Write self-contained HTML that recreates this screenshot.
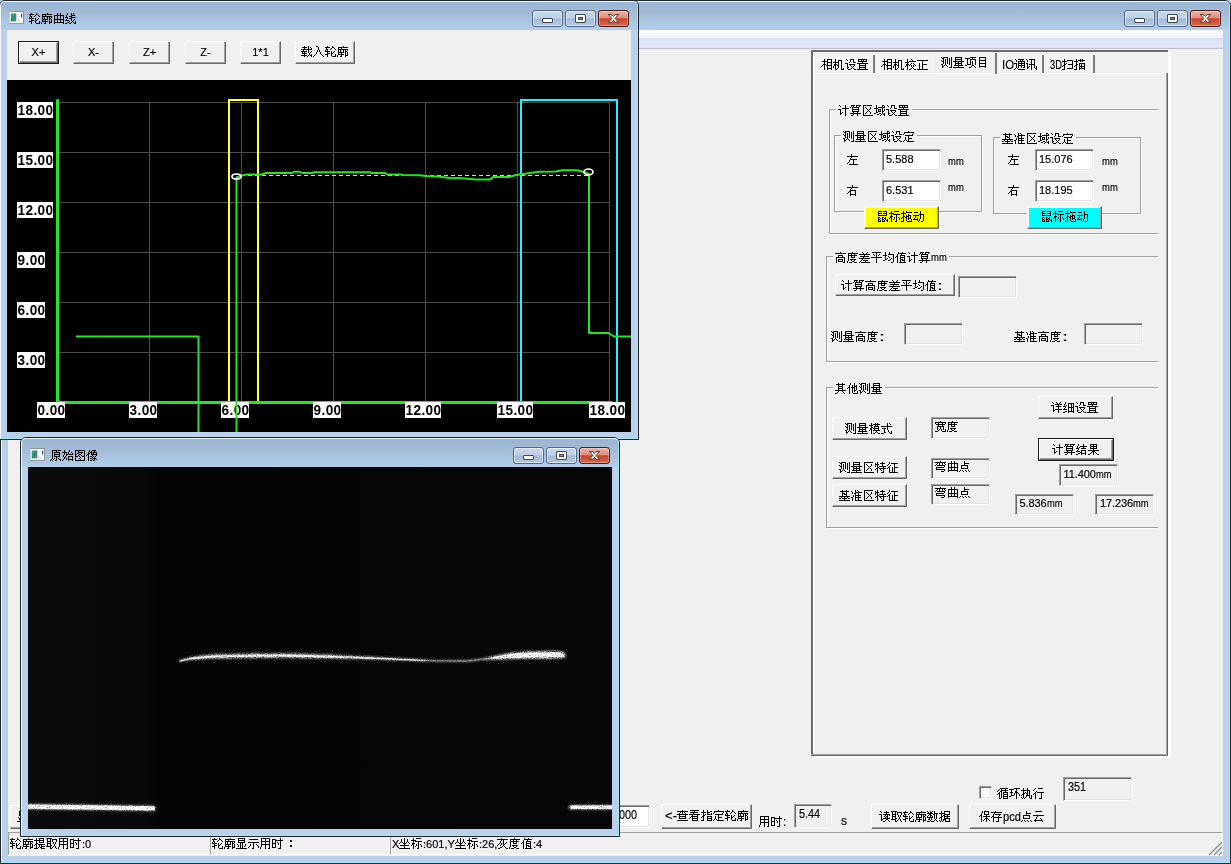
<!DOCTYPE html>
<html lang="zh"><head><meta charset="utf-8"><title>轮廓测量</title>
<style>
*{box-sizing:border-box;margin:0;padding:0}
html,body{width:1231px;height:864px;overflow:hidden;background:#b9d1ea;font-family:"Liberation Sans",sans-serif;}
body{position:relative;opacity:.999}
div,span,svg.bt,svg.abs{position:absolute;display:block}
.t{color:#000;white-space:pre;-webkit-text-stroke:.16px #000;font-family:"Liberation Sans",sans-serif}
.btn{border:1px solid;border-color:#fff #696969 #696969 #fff;box-shadow:inset -1px -1px 0 #a0a0a0, inset 1px 1px 0 #f0f0f0}
.edit{border:1px solid;border-color:#a0a0a0 #fff #fff #a0a0a0;box-shadow:inset 1px 1px 0 #696969, inset -1px -1px 0 #e3e3e3}
.grp{border:1px solid #a0a0a0;box-shadow:1px 1px 0 #fff, inset 1px 1px 0 #fff}
.cap{background:linear-gradient(#97b5d5 0%,#9db8d6 20%,#a4bad5 40%,#abc5e2 70%,#b1ceeb 100%)}
.wb{border:1px solid #566b88;border-radius:3px;background:linear-gradient(#c9d9ec 0%,#bdd0e7 47%,#a4bbd8 53%,#b2c9e4 100%);box-shadow:inset 0 0 0 1px rgba(255,255,255,.5)}
.wc{border:1px solid #47211c;border-radius:3px;background:linear-gradient(#ecb0a2 0%,#df8e7c 45%,#c9432a 52%,#d46a50 100%);box-shadow:inset 0 0 0 1px rgba(255,255,255,.3)}
</style></head><body>

<div style="left:0px;top:0px;width:1231px;height:864px;background:#b9d1ea;border:1px solid #1f252d;border-radius:6px 6px 0 0;overflow:hidden"><div class="cap" style="left:0;top:0;width:1229px;height:29px"></div><div style="left:0;top:0;width:1229px;height:862px;border:1px solid rgba(255,255,255,.9);border-right-color:#a6e3f4;border-bottom-color:#a6e3f4;border-radius:5px 5px 0 0"></div></div>
<div class="wb" style="left:1124.3px;top:10px;width:30.3px;height:16.6px;"></div>
<div style="left:1134.1px;top:18px;width:10.6px;height:4.8px;background:#fff;border:1px solid #3f4854;border-radius:1px"></div>
<div class="wb" style="left:1157.3px;top:10px;width:30.3px;height:16.6px;"></div>
<div style="left:1167.1px;top:14px;width:10.8px;height:8.8px;background:#fff;border:1px solid #3f4854;border-radius:1px"></div>
<div style="left:1169.7px;top:16.8px;width:5.6px;height:3.2px;background:#7d8796;border:1px solid #3f4854"></div>
<div class="wc" style="left:1190.3px;top:10px;width:30.3px;height:16.6px;"></div>
<svg class="abs" style="left:1199.7px;top:14px" width="11" height="9" viewBox="0 0 11 9"><path d="M0.5 0.5h3.2l1.8 2.1 1.8-2.1h3.2l-3.4 3.9 3.4 3.9h-3.2l-1.8-2.1-1.8 2.1h-3.2l3.4-3.9z" fill="#fff" stroke="#4d2620" stroke-width=".9" stroke-linejoin="round"/></svg>
<div style="left:8px;top:30px;width:1215px;height:19px;background:linear-gradient(#fdfdfe 0%,#f1f1f8 40%,#dbe1f1 44%,#e4e6f7 92%,#b9b8c8 93%,#b9b8c8 97%,#f2f1f8 100%)"></div>
<div style="left:8px;top:49px;width:1215px;height:807px;background:#f0f0f0"></div>
<div style="left:811px;top:50px;width:357px;height:706px;border:2px solid #6d6d6d;border-right:none;border-bottom:none"></div>
<div style="left:1168px;top:51px;width:3px;height:707px;background:#fff"></div>
<div style="left:813px;top:756px;width:358px;height:2px;background:#fff"></div>
<div style="left:813px;top:52px;width:2px;height:704px;background:#fff"></div>
<div style="left:811px;top:754px;width:357px;height:2px;background:linear-gradient(#a0a0a0 50%,#696969 50%)"></div>
<div style="left:1166px;top:73px;width:2px;height:683px;background:linear-gradient(90deg,#a0a0a0 50%,#696969 50%)"></div>
<div style="left:815px;top:73px;width:1151px;height:1px;background:#fafafa;width:351px"></div>
<div style="left:816px;top:55px;width:57px;height:18px;background:#f4f4f4"></div>
<svg class="bt" style="left:821px;top:58px" width="50" height="14" viewBox="0 -1 50 14" shape-rendering="crispEdges" role="img" aria-label="相机设置"><title>相机设置</title><path fill="#000" d="M3 0h1v1h-1zM6 0h5v1h-5zM3 1h1v1h-1zM6 1h1v1h-1zM10 1h1v1h-1zM1 2h6v1h-6zM10 2h1v1h-1zM3 3h1v1h-1zM6 3h5v1h-5zM3 4h1v1h-1zM6 4h1v1h-1zM10 4h1v1h-1zM2 5h3v1h-3zM6 5h1v1h-1zM10 5h1v1h-1zM1 6h1v1h-1zM3 6h1v1h-1zM5 6h6v1h-6zM0 7h1v1h-1zM3 7h1v1h-1zM6 7h1v1h-1zM10 7h1v1h-1zM3 8h1v1h-1zM6 8h1v1h-1zM10 8h1v1h-1zM3 9h1v1h-1zM6 9h5v1h-5zM3 10h1v1h-1zM6 10h1v1h-1zM10 10h1v1h-1zM14 0h1v1h-1zM14 1h1v1h-1zM17 1h4v1h-4zM14 2h1v1h-1zM17 2h1v1h-1zM20 2h1v1h-1zM12 3h6v1h-6zM20 3h1v1h-1zM14 4h1v1h-1zM17 4h1v1h-1zM20 4h1v1h-1zM13 5h3v1h-3zM17 5h1v1h-1zM20 5h1v1h-1zM13 6h2v1h-2zM16 6h2v1h-2zM20 6h1v1h-1zM12 7h1v1h-1zM14 7h1v1h-1zM17 7h1v1h-1zM20 7h1v1h-1zM12 8h1v1h-1zM14 8h1v1h-1zM17 8h1v1h-1zM20 8h1v1h-1zM14 9h1v1h-1zM16 9h1v1h-1zM20 9h1v1h-1zM22 9h1v1h-1zM14 10h2v1h-2zM20 10h3v1h-3zM25 0h1v1h-1zM29 0h4v1h-4zM26 1h1v1h-1zM29 1h1v1h-1zM32 1h1v1h-1zM29 2h1v1h-1zM32 2h1v1h-1zM28 3h1v1h-1zM32 3h3v1h-3zM24 4h3v1h-3zM26 5h1v1h-1zM28 5h6v1h-6zM26 6h1v1h-1zM29 6h1v1h-1zM33 6h1v1h-1zM26 7h1v1h-1zM30 7h1v1h-1zM32 7h1v1h-1zM26 8h2v1h-2zM31 8h1v1h-1zM26 9h1v1h-1zM30 9h1v1h-1zM32 9h1v1h-1zM27 10h3v1h-3zM33 10h2v1h-2zM37 0h9v1h-9zM37 1h1v1h-1zM40 1h1v1h-1zM42 1h1v1h-1zM45 1h1v1h-1zM37 2h9v1h-9zM41 3h1v1h-1zM36 4h11v1h-11zM38 5h1v1h-1zM44 5h1v1h-1zM38 6h7v1h-7zM38 7h1v1h-1zM44 7h1v1h-1zM38 8h7v1h-7zM38 9h1v1h-1zM44 9h1v1h-1zM36 10h11v1h-11z"/></svg>
<div style="left:873px;top:55px;width:2px;height:18px;background:#7a7a7a"></div>
<div style="left:877px;top:55px;width:57px;height:18px;background:#f4f4f4"></div>
<svg class="bt" style="left:881px;top:58px" width="50" height="14" viewBox="0 -1 50 14" shape-rendering="crispEdges" role="img" aria-label="相机校正"><title>相机校正</title><path fill="#000" d="M3 0h1v1h-1zM6 0h5v1h-5zM3 1h1v1h-1zM6 1h1v1h-1zM10 1h1v1h-1zM1 2h6v1h-6zM10 2h1v1h-1zM3 3h1v1h-1zM6 3h5v1h-5zM3 4h1v1h-1zM6 4h1v1h-1zM10 4h1v1h-1zM2 5h3v1h-3zM6 5h1v1h-1zM10 5h1v1h-1zM1 6h1v1h-1zM3 6h1v1h-1zM5 6h6v1h-6zM0 7h1v1h-1zM3 7h1v1h-1zM6 7h1v1h-1zM10 7h1v1h-1zM3 8h1v1h-1zM6 8h1v1h-1zM10 8h1v1h-1zM3 9h1v1h-1zM6 9h5v1h-5zM3 10h1v1h-1zM6 10h1v1h-1zM10 10h1v1h-1zM14 0h1v1h-1zM14 1h1v1h-1zM17 1h4v1h-4zM14 2h1v1h-1zM17 2h1v1h-1zM20 2h1v1h-1zM12 3h6v1h-6zM20 3h1v1h-1zM14 4h1v1h-1zM17 4h1v1h-1zM20 4h1v1h-1zM13 5h3v1h-3zM17 5h1v1h-1zM20 5h1v1h-1zM13 6h2v1h-2zM16 6h2v1h-2zM20 6h1v1h-1zM12 7h1v1h-1zM14 7h1v1h-1zM17 7h1v1h-1zM20 7h1v1h-1zM12 8h1v1h-1zM14 8h1v1h-1zM17 8h1v1h-1zM20 8h1v1h-1zM14 9h1v1h-1zM16 9h1v1h-1zM20 9h1v1h-1zM22 9h1v1h-1zM14 10h2v1h-2zM20 10h3v1h-3zM26 0h1v1h-1zM30 0h1v1h-1zM26 1h1v1h-1zM31 1h1v1h-1zM26 2h1v1h-1zM28 2h7v1h-7zM24 3h4v1h-4zM26 4h1v1h-1zM30 4h1v1h-1zM32 4h1v1h-1zM25 5h3v1h-3zM29 5h1v1h-1zM33 5h1v1h-1zM25 6h2v1h-2zM28 6h1v1h-1zM30 6h1v1h-1zM32 6h1v1h-1zM34 6h1v1h-1zM24 7h1v1h-1zM26 7h1v1h-1zM30 7h1v1h-1zM32 7h1v1h-1zM26 8h1v1h-1zM31 8h1v1h-1zM26 9h1v1h-1zM30 9h1v1h-1zM32 9h1v1h-1zM26 10h1v1h-1zM28 10h2v1h-2zM33 10h2v1h-2zM36 1h11v1h-11zM41 2h1v1h-1zM41 3h1v1h-1zM38 4h1v1h-1zM41 4h1v1h-1zM38 5h1v1h-1zM41 5h5v1h-5zM38 6h1v1h-1zM41 6h1v1h-1zM38 7h1v1h-1zM41 7h1v1h-1zM38 8h1v1h-1zM41 8h1v1h-1zM38 9h1v1h-1zM41 9h1v1h-1zM36 10h11v1h-11z"/></svg>
<svg class="bt" style="left:941px;top:56px" width="50" height="14" viewBox="0 -1 50 14" shape-rendering="crispEdges" role="img" aria-label="测量项目"><title>测量项目</title><path fill="#000" d="M0 0h1v1h-1zM2 0h5v1h-5zM10 0h1v1h-1zM1 1h2v1h-2zM6 1h1v1h-1zM8 1h1v1h-1zM10 1h1v1h-1zM2 2h1v1h-1zM4 2h1v1h-1zM6 2h1v1h-1zM8 2h1v1h-1zM10 2h1v1h-1zM0 3h1v1h-1zM2 3h1v1h-1zM4 3h1v1h-1zM6 3h1v1h-1zM8 3h1v1h-1zM10 3h1v1h-1zM1 4h2v1h-2zM4 4h1v1h-1zM6 4h1v1h-1zM8 4h1v1h-1zM10 4h1v1h-1zM2 5h1v1h-1zM4 5h1v1h-1zM6 5h1v1h-1zM8 5h1v1h-1zM10 5h1v1h-1zM2 6h1v1h-1zM4 6h1v1h-1zM6 6h1v1h-1zM8 6h1v1h-1zM10 6h1v1h-1zM0 7h2v1h-2zM4 7h1v1h-1zM8 7h1v1h-1zM10 7h1v1h-1zM1 8h1v1h-1zM3 8h1v1h-1zM5 8h1v1h-1zM10 8h1v1h-1zM1 9h2v1h-2zM6 9h1v1h-1zM10 9h1v1h-1zM1 10h1v1h-1zM8 10h3v1h-3zM14 0h7v1h-7zM14 1h1v1h-1zM20 1h1v1h-1zM14 2h7v1h-7zM14 3h1v1h-1zM20 3h1v1h-1zM12 4h11v1h-11zM14 5h1v1h-1zM17 5h1v1h-1zM20 5h1v1h-1zM14 6h7v1h-7zM14 7h1v1h-1zM17 7h1v1h-1zM20 7h1v1h-1zM13 8h9v1h-9zM17 9h1v1h-1zM12 10h11v1h-11zM29 0h6v1h-6zM24 1h5v1h-5zM31 1h1v1h-1zM26 2h1v1h-1zM29 2h6v1h-6zM26 3h1v1h-1zM29 3h1v1h-1zM34 3h1v1h-1zM26 4h1v1h-1zM29 4h1v1h-1zM31 4h1v1h-1zM34 4h1v1h-1zM26 5h1v1h-1zM29 5h1v1h-1zM31 5h1v1h-1zM34 5h1v1h-1zM26 6h1v1h-1zM29 6h1v1h-1zM31 6h1v1h-1zM34 6h1v1h-1zM26 7h4v1h-4zM31 7h1v1h-1zM34 7h1v1h-1zM24 8h2v1h-2zM31 8h2v1h-2zM30 9h1v1h-1zM33 9h1v1h-1zM28 10h2v1h-2zM34 10h1v1h-1zM38 0h7v1h-7zM38 1h1v1h-1zM44 1h1v1h-1zM38 2h1v1h-1zM44 2h1v1h-1zM38 3h7v1h-7zM38 4h1v1h-1zM44 4h1v1h-1zM38 5h1v1h-1zM44 5h1v1h-1zM38 6h7v1h-7zM38 7h1v1h-1zM44 7h1v1h-1zM38 8h1v1h-1zM44 8h1v1h-1zM38 9h7v1h-7zM38 10h1v1h-1zM44 10h1v1h-1z"/></svg>
<div style="left:995px;top:53px;width:2px;height:21px;background:#7a7a7a"></div>
<div style="left:998px;top:55px;width:44px;height:18px;background:#f4f4f4"></div>
<span class="t" style="left:1002.0px;top:58px;font-size:12px;line-height:14px;color:#000;transform:scaleX(0.947);transform-origin:0 0;">IO</span>
<svg class="bt" style="left:1014px;top:58px" width="26" height="14" viewBox="0 -1 26 14" shape-rendering="crispEdges" role="img" aria-label="通讯"><title>通讯</title><path fill="#000" d="M1 0h1v1h-1zM4 0h6v1h-6zM2 1h1v1h-1zM6 1h1v1h-1zM8 1h1v1h-1zM2 2h1v1h-1zM4 2h7v1h-7zM4 3h1v1h-1zM7 3h1v1h-1zM10 3h1v1h-1zM0 4h3v1h-3zM4 4h7v1h-7zM2 5h1v1h-1zM4 5h1v1h-1zM7 5h1v1h-1zM10 5h1v1h-1zM2 6h1v1h-1zM4 6h7v1h-7zM2 7h1v1h-1zM4 7h1v1h-1zM7 7h1v1h-1zM10 7h1v1h-1zM2 8h1v1h-1zM4 8h1v1h-1zM7 8h1v1h-1zM9 8h2v1h-2zM1 9h1v1h-1zM3 9h1v1h-1zM0 10h1v1h-1zM4 10h7v1h-7zM12 0h1v1h-1zM15 0h6v1h-6zM13 1h1v1h-1zM17 1h1v1h-1zM20 1h1v1h-1zM13 2h1v1h-1zM17 2h1v1h-1zM20 2h1v1h-1zM17 3h1v1h-1zM20 3h1v1h-1zM12 4h2v1h-2zM17 4h1v1h-1zM20 4h1v1h-1zM13 5h1v1h-1zM15 5h6v1h-6zM13 6h1v1h-1zM17 6h1v1h-1zM20 6h1v1h-1zM13 7h1v1h-1zM15 7h1v1h-1zM17 7h1v1h-1zM20 7h1v1h-1zM22 7h1v1h-1zM13 8h2v1h-2zM17 8h1v1h-1zM20 8h1v1h-1zM22 8h1v1h-1zM13 9h1v1h-1zM17 9h1v1h-1zM21 9h2v1h-2zM17 10h1v1h-1zM22 10h1v1h-1z"/></svg>
<div style="left:1042px;top:55px;width:2px;height:18px;background:#7a7a7a"></div>
<div style="left:1046px;top:55px;width:47px;height:18px;background:#f4f4f4"></div>
<span class="t" style="left:1050.0px;top:58px;font-size:12px;line-height:14px;color:#000;transform:scaleX(0.782);transform-origin:0 0;">3D</span>
<svg class="bt" style="left:1062px;top:58px" width="26" height="14" viewBox="0 -1 26 14" shape-rendering="crispEdges" role="img" aria-label="扫描"><title>扫描</title><path fill="#000" d="M2 0h1v1h-1zM2 1h1v1h-1zM5 1h6v1h-6zM0 2h5v1h-5zM10 2h1v1h-1zM2 3h1v1h-1zM10 3h1v1h-1zM2 4h1v1h-1zM4 4h1v1h-1zM10 4h1v1h-1zM2 5h2v1h-2zM6 5h5v1h-5zM1 6h2v1h-2zM10 6h1v1h-1zM0 7h1v1h-1zM2 7h1v1h-1zM10 7h1v1h-1zM2 8h1v1h-1zM10 8h1v1h-1zM2 9h1v1h-1zM5 9h6v1h-6zM0 10h3v1h-3zM14 0h1v1h-1zM18 0h1v1h-1zM20 0h1v1h-1zM14 1h1v1h-1zM16 1h7v1h-7zM12 2h4v1h-4zM18 2h1v1h-1zM20 2h1v1h-1zM14 3h1v1h-1zM14 4h1v1h-1zM17 4h6v1h-6zM14 5h2v1h-2zM17 5h1v1h-1zM19 5h1v1h-1zM22 5h1v1h-1zM13 6h2v1h-2zM17 6h1v1h-1zM19 6h1v1h-1zM22 6h1v1h-1zM12 7h1v1h-1zM14 7h1v1h-1zM17 7h6v1h-6zM14 8h1v1h-1zM17 8h1v1h-1zM19 8h1v1h-1zM22 8h1v1h-1zM14 9h1v1h-1zM17 9h6v1h-6zM12 10h3v1h-3zM17 10h1v1h-1zM22 10h1v1h-1z"/></svg>
<div style="left:1093px;top:55px;width:2px;height:18px;background:#7a7a7a"></div>
<div style="left:829px;top:109px;width:329px;height:126px;border:1px solid #a0a0a0;border-right:none;border-bottom:none;box-shadow:inset 1px 1px 0 #fff"></div>
<div style="left:829px;top:233px;width:329px;height:2px;background:linear-gradient(#a0a0a0 50%,#fff 50%)"></div>
<div style="left:836px;top:104px;width:76px;height:13px;background:#f0f0f0"></div>
<svg class="bt" style="left:838px;top:104px" width="74" height="14" viewBox="0 -1 74 14" shape-rendering="crispEdges" role="img" aria-label="计算区域设置"><title>计算区域设置</title><path fill="#000" d="M1 0h1v1h-1zM7 0h1v1h-1zM2 1h1v1h-1zM7 1h1v1h-1zM7 2h1v1h-1zM4 3h7v1h-7zM0 4h3v1h-3zM7 4h1v1h-1zM2 5h1v1h-1zM7 5h1v1h-1zM2 6h1v1h-1zM7 6h1v1h-1zM2 7h1v1h-1zM4 7h1v1h-1zM7 7h1v1h-1zM2 8h2v1h-2zM7 8h1v1h-1zM2 9h1v1h-1zM7 9h1v1h-1zM7 10h1v1h-1zM13 0h4v1h-4zM18 0h5v1h-5zM13 1h1v1h-1zM15 1h1v1h-1zM18 1h1v1h-1zM21 1h1v1h-1zM12 2h1v1h-1zM14 2h7v1h-7zM14 3h1v1h-1zM20 3h1v1h-1zM14 4h7v1h-7zM14 5h1v1h-1zM20 5h1v1h-1zM14 6h7v1h-7zM15 7h1v1h-1zM19 7h1v1h-1zM12 8h11v1h-11zM15 9h1v1h-1zM19 9h1v1h-1zM13 10h2v1h-2zM19 10h1v1h-1zM25 0h9v1h-9zM25 1h1v1h-1zM25 2h1v1h-1zM27 2h1v1h-1zM32 2h1v1h-1zM25 3h1v1h-1zM28 3h1v1h-1zM32 3h1v1h-1zM25 4h1v1h-1zM29 4h1v1h-1zM31 4h1v1h-1zM25 5h1v1h-1zM30 5h1v1h-1zM25 6h1v1h-1zM29 6h1v1h-1zM31 6h1v1h-1zM25 7h1v1h-1zM28 7h1v1h-1zM32 7h1v1h-1zM25 8h1v1h-1zM27 8h1v1h-1zM32 8h1v1h-1zM25 9h1v1h-1zM25 10h10v1h-10zM38 0h1v1h-1zM44 0h2v1h-2zM38 1h1v1h-1zM44 1h1v1h-1zM46 1h1v1h-1zM38 2h1v1h-1zM40 2h7v1h-7zM36 3h4v1h-4zM44 3h1v1h-1zM38 4h1v1h-1zM40 4h3v1h-3zM44 4h1v1h-1zM46 4h1v1h-1zM38 5h1v1h-1zM40 5h1v1h-1zM42 5h1v1h-1zM44 5h1v1h-1zM46 5h1v1h-1zM38 6h1v1h-1zM40 6h3v1h-3zM44 6h2v1h-2zM38 7h2v1h-2zM44 7h1v1h-1zM36 8h2v1h-2zM41 8h2v1h-2zM44 8h1v1h-1zM46 8h1v1h-1zM39 9h2v1h-2zM43 9h1v1h-1zM45 9h2v1h-2zM42 10h1v1h-1zM46 10h1v1h-1zM49 0h1v1h-1zM53 0h4v1h-4zM50 1h1v1h-1zM53 1h1v1h-1zM56 1h1v1h-1zM53 2h1v1h-1zM56 2h1v1h-1zM52 3h1v1h-1zM56 3h3v1h-3zM48 4h3v1h-3zM50 5h1v1h-1zM52 5h6v1h-6zM50 6h1v1h-1zM53 6h1v1h-1zM57 6h1v1h-1zM50 7h1v1h-1zM54 7h1v1h-1zM56 7h1v1h-1zM50 8h2v1h-2zM55 8h1v1h-1zM50 9h1v1h-1zM54 9h1v1h-1zM56 9h1v1h-1zM51 10h3v1h-3zM57 10h2v1h-2zM61 0h9v1h-9zM61 1h1v1h-1zM64 1h1v1h-1zM66 1h1v1h-1zM69 1h1v1h-1zM61 2h9v1h-9zM65 3h1v1h-1zM60 4h11v1h-11zM62 5h1v1h-1zM68 5h1v1h-1zM62 6h7v1h-7zM62 7h1v1h-1zM68 7h1v1h-1zM62 8h7v1h-7zM62 9h1v1h-1zM68 9h1v1h-1zM60 10h11v1h-11z"/></svg>
<div class="grp" style="left:834px;top:135px;width:148px;height:77px;"></div>
<div style="left:841px;top:130px;width:76px;height:13px;background:#f0f0f0"></div>
<svg class="bt" style="left:843px;top:130px" width="74" height="14" viewBox="0 -1 74 14" shape-rendering="crispEdges" role="img" aria-label="测量区域设定"><title>测量区域设定</title><path fill="#000" d="M0 0h1v1h-1zM2 0h5v1h-5zM10 0h1v1h-1zM1 1h2v1h-2zM6 1h1v1h-1zM8 1h1v1h-1zM10 1h1v1h-1zM2 2h1v1h-1zM4 2h1v1h-1zM6 2h1v1h-1zM8 2h1v1h-1zM10 2h1v1h-1zM0 3h1v1h-1zM2 3h1v1h-1zM4 3h1v1h-1zM6 3h1v1h-1zM8 3h1v1h-1zM10 3h1v1h-1zM1 4h2v1h-2zM4 4h1v1h-1zM6 4h1v1h-1zM8 4h1v1h-1zM10 4h1v1h-1zM2 5h1v1h-1zM4 5h1v1h-1zM6 5h1v1h-1zM8 5h1v1h-1zM10 5h1v1h-1zM2 6h1v1h-1zM4 6h1v1h-1zM6 6h1v1h-1zM8 6h1v1h-1zM10 6h1v1h-1zM0 7h2v1h-2zM4 7h1v1h-1zM8 7h1v1h-1zM10 7h1v1h-1zM1 8h1v1h-1zM3 8h1v1h-1zM5 8h1v1h-1zM10 8h1v1h-1zM1 9h2v1h-2zM6 9h1v1h-1zM10 9h1v1h-1zM1 10h1v1h-1zM8 10h3v1h-3zM14 0h7v1h-7zM14 1h1v1h-1zM20 1h1v1h-1zM14 2h7v1h-7zM14 3h1v1h-1zM20 3h1v1h-1zM12 4h11v1h-11zM14 5h1v1h-1zM17 5h1v1h-1zM20 5h1v1h-1zM14 6h7v1h-7zM14 7h1v1h-1zM17 7h1v1h-1zM20 7h1v1h-1zM13 8h9v1h-9zM17 9h1v1h-1zM12 10h11v1h-11zM25 0h9v1h-9zM25 1h1v1h-1zM25 2h1v1h-1zM27 2h1v1h-1zM32 2h1v1h-1zM25 3h1v1h-1zM28 3h1v1h-1zM32 3h1v1h-1zM25 4h1v1h-1zM29 4h1v1h-1zM31 4h1v1h-1zM25 5h1v1h-1zM30 5h1v1h-1zM25 6h1v1h-1zM29 6h1v1h-1zM31 6h1v1h-1zM25 7h1v1h-1zM28 7h1v1h-1zM32 7h1v1h-1zM25 8h1v1h-1zM27 8h1v1h-1zM32 8h1v1h-1zM25 9h1v1h-1zM25 10h10v1h-10zM38 0h1v1h-1zM44 0h2v1h-2zM38 1h1v1h-1zM44 1h1v1h-1zM46 1h1v1h-1zM38 2h1v1h-1zM40 2h7v1h-7zM36 3h4v1h-4zM44 3h1v1h-1zM38 4h1v1h-1zM40 4h3v1h-3zM44 4h1v1h-1zM46 4h1v1h-1zM38 5h1v1h-1zM40 5h1v1h-1zM42 5h1v1h-1zM44 5h1v1h-1zM46 5h1v1h-1zM38 6h1v1h-1zM40 6h3v1h-3zM44 6h2v1h-2zM38 7h2v1h-2zM44 7h1v1h-1zM36 8h2v1h-2zM41 8h2v1h-2zM44 8h1v1h-1zM46 8h1v1h-1zM39 9h2v1h-2zM43 9h1v1h-1zM45 9h2v1h-2zM42 10h1v1h-1zM46 10h1v1h-1zM49 0h1v1h-1zM53 0h4v1h-4zM50 1h1v1h-1zM53 1h1v1h-1zM56 1h1v1h-1zM53 2h1v1h-1zM56 2h1v1h-1zM52 3h1v1h-1zM56 3h3v1h-3zM48 4h3v1h-3zM50 5h1v1h-1zM52 5h6v1h-6zM50 6h1v1h-1zM53 6h1v1h-1zM57 6h1v1h-1zM50 7h1v1h-1zM54 7h1v1h-1zM56 7h1v1h-1zM50 8h2v1h-2zM55 8h1v1h-1zM50 9h1v1h-1zM54 9h1v1h-1zM56 9h1v1h-1zM51 10h3v1h-3zM57 10h2v1h-2zM65 0h1v1h-1zM61 1h10v1h-10zM61 2h1v1h-1zM70 2h1v1h-1zM60 3h1v1h-1zM69 3h1v1h-1zM62 4h8v1h-8zM65 5h1v1h-1zM62 6h1v1h-1zM65 6h1v1h-1zM62 7h1v1h-1zM65 7h4v1h-4zM62 8h1v1h-1zM65 8h1v1h-1zM61 9h1v1h-1zM63 9h1v1h-1zM65 9h1v1h-1zM60 10h1v1h-1zM64 10h7v1h-7z"/></svg>
<div class="grp" style="left:993px;top:137px;width:148px;height:77px;"></div>
<div style="left:1000px;top:132px;width:76px;height:13px;background:#f0f0f0"></div>
<svg class="bt" style="left:1002px;top:132px" width="74" height="14" viewBox="0 -1 74 14" shape-rendering="crispEdges" role="img" aria-label="基准区域设定"><title>基准区域设定</title><path fill="#000" d="M3 0h1v1h-1zM7 0h1v1h-1zM1 1h9v1h-9zM3 2h1v1h-1zM7 2h1v1h-1zM3 3h3v1h-3zM7 3h1v1h-1zM3 4h1v1h-1zM5 4h3v1h-3zM3 5h1v1h-1zM7 5h1v1h-1zM0 6h11v1h-11zM2 7h1v1h-1zM5 7h1v1h-1zM8 7h1v1h-1zM0 8h2v1h-2zM3 8h5v1h-5zM9 8h2v1h-2zM5 9h1v1h-1zM0 10h11v1h-11zM16 0h1v1h-1zM18 0h1v1h-1zM12 1h1v1h-1zM16 1h1v1h-1zM19 1h1v1h-1zM13 2h1v1h-1zM16 2h7v1h-7zM13 3h1v1h-1zM15 3h2v1h-2zM19 3h1v1h-1zM16 4h1v1h-1zM19 4h1v1h-1zM14 5h1v1h-1zM16 5h6v1h-6zM14 6h1v1h-1zM16 6h1v1h-1zM19 6h1v1h-1zM12 7h2v1h-2zM16 7h6v1h-6zM13 8h1v1h-1zM16 8h1v1h-1zM19 8h1v1h-1zM13 9h1v1h-1zM16 9h1v1h-1zM19 9h1v1h-1zM13 10h1v1h-1zM16 10h7v1h-7zM25 0h9v1h-9zM25 1h1v1h-1zM25 2h1v1h-1zM27 2h1v1h-1zM32 2h1v1h-1zM25 3h1v1h-1zM28 3h1v1h-1zM32 3h1v1h-1zM25 4h1v1h-1zM29 4h1v1h-1zM31 4h1v1h-1zM25 5h1v1h-1zM30 5h1v1h-1zM25 6h1v1h-1zM29 6h1v1h-1zM31 6h1v1h-1zM25 7h1v1h-1zM28 7h1v1h-1zM32 7h1v1h-1zM25 8h1v1h-1zM27 8h1v1h-1zM32 8h1v1h-1zM25 9h1v1h-1zM25 10h10v1h-10zM38 0h1v1h-1zM44 0h2v1h-2zM38 1h1v1h-1zM44 1h1v1h-1zM46 1h1v1h-1zM38 2h1v1h-1zM40 2h7v1h-7zM36 3h4v1h-4zM44 3h1v1h-1zM38 4h1v1h-1zM40 4h3v1h-3zM44 4h1v1h-1zM46 4h1v1h-1zM38 5h1v1h-1zM40 5h1v1h-1zM42 5h1v1h-1zM44 5h1v1h-1zM46 5h1v1h-1zM38 6h1v1h-1zM40 6h3v1h-3zM44 6h2v1h-2zM38 7h2v1h-2zM44 7h1v1h-1zM36 8h2v1h-2zM41 8h2v1h-2zM44 8h1v1h-1zM46 8h1v1h-1zM39 9h2v1h-2zM43 9h1v1h-1zM45 9h2v1h-2zM42 10h1v1h-1zM46 10h1v1h-1zM49 0h1v1h-1zM53 0h4v1h-4zM50 1h1v1h-1zM53 1h1v1h-1zM56 1h1v1h-1zM53 2h1v1h-1zM56 2h1v1h-1zM52 3h1v1h-1zM56 3h3v1h-3zM48 4h3v1h-3zM50 5h1v1h-1zM52 5h6v1h-6zM50 6h1v1h-1zM53 6h1v1h-1zM57 6h1v1h-1zM50 7h1v1h-1zM54 7h1v1h-1zM56 7h1v1h-1zM50 8h2v1h-2zM55 8h1v1h-1zM50 9h1v1h-1zM54 9h1v1h-1zM56 9h1v1h-1zM51 10h3v1h-3zM57 10h2v1h-2zM65 0h1v1h-1zM61 1h10v1h-10zM61 2h1v1h-1zM70 2h1v1h-1zM60 3h1v1h-1zM69 3h1v1h-1zM62 4h8v1h-8zM65 5h1v1h-1zM62 6h1v1h-1zM65 6h1v1h-1zM62 7h1v1h-1zM65 7h4v1h-4zM62 8h1v1h-1zM65 8h1v1h-1zM61 9h1v1h-1zM63 9h1v1h-1zM65 9h1v1h-1zM60 10h1v1h-1zM64 10h7v1h-7z"/></svg>
<svg class="bt" style="left:847px;top:153px" width="14" height="14" viewBox="0 -1 14 14" shape-rendering="crispEdges" role="img" aria-label="左"><title>左</title><path fill="#000" d="M4 0h1v1h-1zM4 1h1v1h-1zM0 2h11v1h-11zM4 3h1v1h-1zM3 4h1v1h-1zM3 5h7v1h-7zM2 6h1v1h-1zM6 6h1v1h-1zM2 7h1v1h-1zM6 7h1v1h-1zM1 8h1v1h-1zM6 8h1v1h-1zM0 9h1v1h-1zM6 9h1v1h-1zM2 10h9v1h-9z"/></svg>
<div class="edit" style="left:882px;top:149px;width:59px;height:22px;background:#fff"></div>
<span class="t" style="left:886px;top:153px;font-size:11px;line-height:13px;">5.588</span>
<span class="t" style="left:947.5px;top:155px;font-size:11px;line-height:13px;transform:scaleX(.86);transform-origin:0 0">mm</span>
<svg class="bt" style="left:847px;top:184px" width="14" height="14" viewBox="0 -1 14 14" shape-rendering="crispEdges" role="img" aria-label="右"><title>右</title><path fill="#000" d="M5 0h1v1h-1zM5 1h1v1h-1zM0 2h11v1h-11zM4 3h1v1h-1zM3 4h1v1h-1zM3 5h6v1h-6zM2 6h2v1h-2zM8 6h1v1h-1zM1 7h1v1h-1zM3 7h1v1h-1zM8 7h1v1h-1zM0 8h1v1h-1zM3 8h1v1h-1zM8 8h1v1h-1zM3 9h6v1h-6zM3 10h1v1h-1zM8 10h1v1h-1z"/></svg>
<div class="edit" style="left:882px;top:180px;width:59px;height:22px;background:#fff"></div>
<span class="t" style="left:886px;top:184px;font-size:11px;line-height:13px;">6.531</span>
<span class="t" style="left:947.5px;top:181px;font-size:11px;line-height:13px;transform:scaleX(.86);transform-origin:0 0">mm</span>
<div class="btn" style="left:864px;top:206px;width:75px;height:23px;background:#ffff00"></div>
<svg class="bt" style="left:877px;top:210px" width="50" height="14" viewBox="0 -1 50 14" shape-rendering="crispEdges" role="img" aria-label="鼠标拖动"><title>鼠标拖动</title><path fill="#000" d="M1 0h4v1h-4zM6 0h4v1h-4zM1 1h1v1h-1zM9 1h1v1h-1zM1 2h4v1h-4zM6 2h4v1h-4zM1 3h1v1h-1zM9 3h1v1h-1zM1 4h9v1h-9zM1 6h2v1h-2zM5 6h2v1h-2zM8 6h1v1h-1zM1 7h1v1h-1zM3 7h1v1h-1zM5 7h1v1h-1zM7 7h2v1h-2zM1 8h2v1h-2zM5 8h2v1h-2zM8 8h1v1h-1zM10 8h1v1h-1zM1 9h1v1h-1zM3 9h1v1h-1zM5 9h1v1h-1zM7 9h1v1h-1zM9 9h2v1h-2zM1 10h3v1h-3zM5 10h3v1h-3zM10 10h1v1h-1zM14 0h1v1h-1zM17 0h5v1h-5zM14 1h1v1h-1zM12 2h5v1h-5zM14 3h1v1h-1zM16 3h7v1h-7zM14 4h1v1h-1zM19 4h1v1h-1zM13 5h3v1h-3zM19 5h1v1h-1zM13 6h2v1h-2zM17 6h1v1h-1zM19 6h1v1h-1zM21 6h1v1h-1zM12 7h1v1h-1zM14 7h1v1h-1zM17 7h1v1h-1zM19 7h1v1h-1zM22 7h1v1h-1zM14 8h1v1h-1zM16 8h1v1h-1zM19 8h1v1h-1zM22 8h1v1h-1zM14 9h1v1h-1zM19 9h1v1h-1zM14 10h1v1h-1zM18 10h2v1h-2zM26 0h1v1h-1zM29 0h1v1h-1zM26 1h1v1h-1zM29 1h6v1h-6zM24 2h5v1h-5zM26 3h1v1h-1zM31 3h1v1h-1zM26 4h1v1h-1zM29 4h1v1h-1zM31 4h3v1h-3zM26 5h2v1h-2zM29 5h3v1h-3zM33 5h1v1h-1zM25 6h2v1h-2zM28 6h2v1h-2zM31 6h1v1h-1zM33 6h1v1h-1zM24 7h1v1h-1zM26 7h1v1h-1zM29 7h1v1h-1zM31 7h3v1h-3zM26 8h1v1h-1zM29 8h1v1h-1zM31 8h1v1h-1zM34 8h1v1h-1zM26 9h1v1h-1zM29 9h1v1h-1zM34 9h1v1h-1zM24 10h3v1h-3zM30 10h5v1h-5zM43 0h1v1h-1zM37 1h4v1h-4zM43 1h1v1h-1zM43 2h1v1h-1zM42 3h5v1h-5zM36 4h6v1h-6zM43 4h1v1h-1zM46 4h1v1h-1zM38 5h1v1h-1zM43 5h1v1h-1zM46 5h1v1h-1zM38 6h1v1h-1zM43 6h1v1h-1zM46 6h1v1h-1zM37 7h1v1h-1zM40 7h1v1h-1zM43 7h1v1h-1zM46 7h1v1h-1zM36 8h5v1h-5zM42 8h1v1h-1zM46 8h1v1h-1zM40 9h1v1h-1zM42 9h1v1h-1zM46 9h1v1h-1zM41 10h1v1h-1zM44 10h2v1h-2z"/></svg>
<svg class="bt" style="left:1008px;top:153px" width="14" height="14" viewBox="0 -1 14 14" shape-rendering="crispEdges" role="img" aria-label="左"><title>左</title><path fill="#000" d="M4 0h1v1h-1zM4 1h1v1h-1zM0 2h11v1h-11zM4 3h1v1h-1zM3 4h1v1h-1zM3 5h7v1h-7zM2 6h1v1h-1zM6 6h1v1h-1zM2 7h1v1h-1zM6 7h1v1h-1zM1 8h1v1h-1zM6 8h1v1h-1zM0 9h1v1h-1zM6 9h1v1h-1zM2 10h9v1h-9z"/></svg>
<div class="edit" style="left:1035px;top:149px;width:59px;height:22px;background:#fff"></div>
<span class="t" style="left:1039px;top:153px;font-size:11px;line-height:13px;">15.076</span>
<span class="t" style="left:1101.5px;top:155px;font-size:11px;line-height:13px;transform:scaleX(.86);transform-origin:0 0">mm</span>
<svg class="bt" style="left:1008px;top:184px" width="14" height="14" viewBox="0 -1 14 14" shape-rendering="crispEdges" role="img" aria-label="右"><title>右</title><path fill="#000" d="M5 0h1v1h-1zM5 1h1v1h-1zM0 2h11v1h-11zM4 3h1v1h-1zM3 4h1v1h-1zM3 5h6v1h-6zM2 6h2v1h-2zM8 6h1v1h-1zM1 7h1v1h-1zM3 7h1v1h-1zM8 7h1v1h-1zM0 8h1v1h-1zM3 8h1v1h-1zM8 8h1v1h-1zM3 9h6v1h-6zM3 10h1v1h-1zM8 10h1v1h-1z"/></svg>
<div class="edit" style="left:1035px;top:180px;width:59px;height:22px;background:#fff"></div>
<span class="t" style="left:1039px;top:184px;font-size:11px;line-height:13px;">18.195</span>
<span class="t" style="left:1101.5px;top:181px;font-size:11px;line-height:13px;transform:scaleX(.86);transform-origin:0 0">mm</span>
<div class="btn" style="left:1027px;top:206px;width:75px;height:23px;background:#00ffff"></div>
<svg class="bt" style="left:1041px;top:210px" width="50" height="14" viewBox="0 -1 50 14" shape-rendering="crispEdges" role="img" aria-label="鼠标拖动"><title>鼠标拖动</title><path fill="#000" d="M1 0h4v1h-4zM6 0h4v1h-4zM1 1h1v1h-1zM9 1h1v1h-1zM1 2h4v1h-4zM6 2h4v1h-4zM1 3h1v1h-1zM9 3h1v1h-1zM1 4h9v1h-9zM1 6h2v1h-2zM5 6h2v1h-2zM8 6h1v1h-1zM1 7h1v1h-1zM3 7h1v1h-1zM5 7h1v1h-1zM7 7h2v1h-2zM1 8h2v1h-2zM5 8h2v1h-2zM8 8h1v1h-1zM10 8h1v1h-1zM1 9h1v1h-1zM3 9h1v1h-1zM5 9h1v1h-1zM7 9h1v1h-1zM9 9h2v1h-2zM1 10h3v1h-3zM5 10h3v1h-3zM10 10h1v1h-1zM14 0h1v1h-1zM17 0h5v1h-5zM14 1h1v1h-1zM12 2h5v1h-5zM14 3h1v1h-1zM16 3h7v1h-7zM14 4h1v1h-1zM19 4h1v1h-1zM13 5h3v1h-3zM19 5h1v1h-1zM13 6h2v1h-2zM17 6h1v1h-1zM19 6h1v1h-1zM21 6h1v1h-1zM12 7h1v1h-1zM14 7h1v1h-1zM17 7h1v1h-1zM19 7h1v1h-1zM22 7h1v1h-1zM14 8h1v1h-1zM16 8h1v1h-1zM19 8h1v1h-1zM22 8h1v1h-1zM14 9h1v1h-1zM19 9h1v1h-1zM14 10h1v1h-1zM18 10h2v1h-2zM26 0h1v1h-1zM29 0h1v1h-1zM26 1h1v1h-1zM29 1h6v1h-6zM24 2h5v1h-5zM26 3h1v1h-1zM31 3h1v1h-1zM26 4h1v1h-1zM29 4h1v1h-1zM31 4h3v1h-3zM26 5h2v1h-2zM29 5h3v1h-3zM33 5h1v1h-1zM25 6h2v1h-2zM28 6h2v1h-2zM31 6h1v1h-1zM33 6h1v1h-1zM24 7h1v1h-1zM26 7h1v1h-1zM29 7h1v1h-1zM31 7h3v1h-3zM26 8h1v1h-1zM29 8h1v1h-1zM31 8h1v1h-1zM34 8h1v1h-1zM26 9h1v1h-1zM29 9h1v1h-1zM34 9h1v1h-1zM24 10h3v1h-3zM30 10h5v1h-5zM43 0h1v1h-1zM37 1h4v1h-4zM43 1h1v1h-1zM43 2h1v1h-1zM42 3h5v1h-5zM36 4h6v1h-6zM43 4h1v1h-1zM46 4h1v1h-1zM38 5h1v1h-1zM43 5h1v1h-1zM46 5h1v1h-1zM38 6h1v1h-1zM43 6h1v1h-1zM46 6h1v1h-1zM37 7h1v1h-1zM40 7h1v1h-1zM43 7h1v1h-1zM46 7h1v1h-1zM36 8h5v1h-5zM42 8h1v1h-1zM46 8h1v1h-1zM40 9h1v1h-1zM42 9h1v1h-1zM46 9h1v1h-1zM41 10h1v1h-1zM44 10h2v1h-2z"/></svg>
<div style="left:826px;top:256px;width:332px;height:107px;border:1px solid #a0a0a0;border-right:none;border-bottom:none;box-shadow:inset 1px 1px 0 #fff"></div>
<div style="left:826px;top:361px;width:332px;height:2px;background:linear-gradient(#a0a0a0 50%,#fff 50%)"></div>
<div style="left:833px;top:251px;width:116px;height:13px;background:#f0f0f0"></div>
<svg class="bt" style="left:835px;top:251px" width="98" height="14" viewBox="0 -1 98 14" shape-rendering="crispEdges" role="img" aria-label="高度差平均值计算"><title>高度差平均值计算</title><path fill="#000" d="M5 0h1v1h-1zM0 1h11v1h-11zM3 3h5v1h-5zM3 4h1v1h-1zM7 4h1v1h-1zM1 5h9v1h-9zM1 6h1v1h-1zM9 6h1v1h-1zM1 7h1v1h-1zM3 7h5v1h-5zM9 7h1v1h-1zM1 8h1v1h-1zM3 8h1v1h-1zM7 8h1v1h-1zM9 8h1v1h-1zM1 9h1v1h-1zM3 9h5v1h-5zM9 9h1v1h-1zM1 10h1v1h-1zM8 10h2v1h-2zM17 0h1v1h-1zM13 1h10v1h-10zM13 2h1v1h-1zM16 2h1v1h-1zM19 2h1v1h-1zM13 3h9v1h-9zM13 4h1v1h-1zM16 4h1v1h-1zM19 4h1v1h-1zM13 5h1v1h-1zM16 5h4v1h-4zM13 6h1v1h-1zM13 7h1v1h-1zM15 7h6v1h-6zM13 8h1v1h-1zM16 8h1v1h-1zM19 8h1v1h-1zM12 9h1v1h-1zM17 9h2v1h-2zM12 10h1v1h-1zM14 10h3v1h-3zM19 10h3v1h-3zM27 0h1v1h-1zM32 0h1v1h-1zM28 1h1v1h-1zM31 1h1v1h-1zM24 2h11v1h-11zM29 3h1v1h-1zM25 4h9v1h-9zM28 5h1v1h-1zM24 6h11v1h-11zM27 7h1v1h-1zM26 8h1v1h-1zM28 8h5v1h-5zM25 9h1v1h-1zM30 9h1v1h-1zM24 10h1v1h-1zM26 10h9v1h-9zM37 0h9v1h-9zM41 1h1v1h-1zM38 2h1v1h-1zM41 2h1v1h-1zM44 2h1v1h-1zM39 3h1v1h-1zM41 3h1v1h-1zM43 3h1v1h-1zM41 4h1v1h-1zM36 5h11v1h-11zM41 6h1v1h-1zM41 7h1v1h-1zM41 8h1v1h-1zM41 9h1v1h-1zM41 10h1v1h-1zM50 0h1v1h-1zM54 0h1v1h-1zM50 1h1v1h-1zM54 1h1v1h-1zM50 2h1v1h-1zM53 2h6v1h-6zM48 3h4v1h-4zM58 3h1v1h-1zM50 4h1v1h-1zM53 4h1v1h-1zM58 4h1v1h-1zM50 5h1v1h-1zM54 5h1v1h-1zM58 5h1v1h-1zM50 6h1v1h-1zM52 6h1v1h-1zM56 6h1v1h-1zM58 6h1v1h-1zM50 7h2v1h-2zM55 7h1v1h-1zM58 7h1v1h-1zM48 8h2v1h-2zM53 8h2v1h-2zM58 8h1v1h-1zM58 9h1v1h-1zM56 10h2v1h-2zM63 0h1v1h-1zM67 0h1v1h-1zM63 1h8v1h-8zM62 2h1v1h-1zM66 2h1v1h-1zM62 3h1v1h-1zM65 3h5v1h-5zM61 4h2v1h-2zM65 4h1v1h-1zM69 4h1v1h-1zM60 5h1v1h-1zM62 5h1v1h-1zM65 5h5v1h-5zM62 6h1v1h-1zM65 6h1v1h-1zM69 6h1v1h-1zM62 7h1v1h-1zM65 7h3v1h-3zM69 7h1v1h-1zM62 8h1v1h-1zM65 8h1v1h-1zM67 8h3v1h-3zM62 9h1v1h-1zM65 9h1v1h-1zM69 9h1v1h-1zM62 10h1v1h-1zM64 10h7v1h-7zM73 0h1v1h-1zM79 0h1v1h-1zM74 1h1v1h-1zM79 1h1v1h-1zM79 2h1v1h-1zM76 3h7v1h-7zM72 4h3v1h-3zM79 4h1v1h-1zM74 5h1v1h-1zM79 5h1v1h-1zM74 6h1v1h-1zM79 6h1v1h-1zM74 7h1v1h-1zM76 7h1v1h-1zM79 7h1v1h-1zM74 8h2v1h-2zM79 8h1v1h-1zM74 9h1v1h-1zM79 9h1v1h-1zM79 10h1v1h-1zM85 0h4v1h-4zM90 0h5v1h-5zM85 1h1v1h-1zM87 1h1v1h-1zM90 1h1v1h-1zM93 1h1v1h-1zM84 2h1v1h-1zM86 2h7v1h-7zM86 3h1v1h-1zM92 3h1v1h-1zM86 4h7v1h-7zM86 5h1v1h-1zM92 5h1v1h-1zM86 6h7v1h-7zM87 7h1v1h-1zM91 7h1v1h-1zM84 8h11v1h-11zM87 9h1v1h-1zM91 9h1v1h-1zM85 10h2v1h-2zM91 10h1v1h-1z"/></svg>
<span class="t" style="left:931px;top:251px;font-size:11px;line-height:13px;transform:scaleX(.86);transform-origin:0 0">mm</span>
<div class="btn" style="left:835px;top:274px;width:120px;height:22px;background:#f0f0f0"></div>
<svg class="bt" style="left:841px;top:279px" width="98" height="14" viewBox="0 -1 98 14" shape-rendering="crispEdges" role="img" aria-label="计算高度差平均值"><title>计算高度差平均值</title><path fill="#000" d="M1 0h1v1h-1zM7 0h1v1h-1zM2 1h1v1h-1zM7 1h1v1h-1zM7 2h1v1h-1zM4 3h7v1h-7zM0 4h3v1h-3zM7 4h1v1h-1zM2 5h1v1h-1zM7 5h1v1h-1zM2 6h1v1h-1zM7 6h1v1h-1zM2 7h1v1h-1zM4 7h1v1h-1zM7 7h1v1h-1zM2 8h2v1h-2zM7 8h1v1h-1zM2 9h1v1h-1zM7 9h1v1h-1zM7 10h1v1h-1zM13 0h4v1h-4zM18 0h5v1h-5zM13 1h1v1h-1zM15 1h1v1h-1zM18 1h1v1h-1zM21 1h1v1h-1zM12 2h1v1h-1zM14 2h7v1h-7zM14 3h1v1h-1zM20 3h1v1h-1zM14 4h7v1h-7zM14 5h1v1h-1zM20 5h1v1h-1zM14 6h7v1h-7zM15 7h1v1h-1zM19 7h1v1h-1zM12 8h11v1h-11zM15 9h1v1h-1zM19 9h1v1h-1zM13 10h2v1h-2zM19 10h1v1h-1zM29 0h1v1h-1zM24 1h11v1h-11zM27 3h5v1h-5zM27 4h1v1h-1zM31 4h1v1h-1zM25 5h9v1h-9zM25 6h1v1h-1zM33 6h1v1h-1zM25 7h1v1h-1zM27 7h5v1h-5zM33 7h1v1h-1zM25 8h1v1h-1zM27 8h1v1h-1zM31 8h1v1h-1zM33 8h1v1h-1zM25 9h1v1h-1zM27 9h5v1h-5zM33 9h1v1h-1zM25 10h1v1h-1zM32 10h2v1h-2zM41 0h1v1h-1zM37 1h10v1h-10zM37 2h1v1h-1zM40 2h1v1h-1zM43 2h1v1h-1zM37 3h9v1h-9zM37 4h1v1h-1zM40 4h1v1h-1zM43 4h1v1h-1zM37 5h1v1h-1zM40 5h4v1h-4zM37 6h1v1h-1zM37 7h1v1h-1zM39 7h6v1h-6zM37 8h1v1h-1zM40 8h1v1h-1zM43 8h1v1h-1zM36 9h1v1h-1zM41 9h2v1h-2zM36 10h1v1h-1zM38 10h3v1h-3zM43 10h3v1h-3zM51 0h1v1h-1zM56 0h1v1h-1zM52 1h1v1h-1zM55 1h1v1h-1zM48 2h11v1h-11zM53 3h1v1h-1zM49 4h9v1h-9zM52 5h1v1h-1zM48 6h11v1h-11zM51 7h1v1h-1zM50 8h1v1h-1zM52 8h5v1h-5zM49 9h1v1h-1zM54 9h1v1h-1zM48 10h1v1h-1zM50 10h9v1h-9zM61 0h9v1h-9zM65 1h1v1h-1zM62 2h1v1h-1zM65 2h1v1h-1zM68 2h1v1h-1zM63 3h1v1h-1zM65 3h1v1h-1zM67 3h1v1h-1zM65 4h1v1h-1zM60 5h11v1h-11zM65 6h1v1h-1zM65 7h1v1h-1zM65 8h1v1h-1zM65 9h1v1h-1zM65 10h1v1h-1zM74 0h1v1h-1zM78 0h1v1h-1zM74 1h1v1h-1zM78 1h1v1h-1zM74 2h1v1h-1zM77 2h6v1h-6zM72 3h4v1h-4zM82 3h1v1h-1zM74 4h1v1h-1zM77 4h1v1h-1zM82 4h1v1h-1zM74 5h1v1h-1zM78 5h1v1h-1zM82 5h1v1h-1zM74 6h1v1h-1zM76 6h1v1h-1zM80 6h1v1h-1zM82 6h1v1h-1zM74 7h2v1h-2zM79 7h1v1h-1zM82 7h1v1h-1zM72 8h2v1h-2zM77 8h2v1h-2zM82 8h1v1h-1zM82 9h1v1h-1zM80 10h2v1h-2zM87 0h1v1h-1zM91 0h1v1h-1zM87 1h8v1h-8zM86 2h1v1h-1zM90 2h1v1h-1zM86 3h1v1h-1zM89 3h5v1h-5zM85 4h2v1h-2zM89 4h1v1h-1zM93 4h1v1h-1zM84 5h1v1h-1zM86 5h1v1h-1zM89 5h5v1h-5zM86 6h1v1h-1zM89 6h1v1h-1zM93 6h1v1h-1zM86 7h1v1h-1zM89 7h3v1h-3zM93 7h1v1h-1zM86 8h1v1h-1zM89 8h1v1h-1zM91 8h3v1h-3zM86 9h1v1h-1zM89 9h1v1h-1zM93 9h1v1h-1zM86 10h1v1h-1zM88 10h7v1h-7z"/></svg>
<span class="t" style="left:937.0px;top:279px;font-size:12px;line-height:14px;color:#000;transform:scaleX(1.800);transform-origin:0 0;">:</span>
<div class="edit" style="left:958px;top:276px;width:59px;height:22px;background:#f0f0f0"></div>
<svg class="bt" style="left:831px;top:330px" width="50" height="14" viewBox="0 -1 50 14" shape-rendering="crispEdges" role="img" aria-label="测量高度"><title>测量高度</title><path fill="#000" d="M0 0h1v1h-1zM2 0h5v1h-5zM10 0h1v1h-1zM1 1h2v1h-2zM6 1h1v1h-1zM8 1h1v1h-1zM10 1h1v1h-1zM2 2h1v1h-1zM4 2h1v1h-1zM6 2h1v1h-1zM8 2h1v1h-1zM10 2h1v1h-1zM0 3h1v1h-1zM2 3h1v1h-1zM4 3h1v1h-1zM6 3h1v1h-1zM8 3h1v1h-1zM10 3h1v1h-1zM1 4h2v1h-2zM4 4h1v1h-1zM6 4h1v1h-1zM8 4h1v1h-1zM10 4h1v1h-1zM2 5h1v1h-1zM4 5h1v1h-1zM6 5h1v1h-1zM8 5h1v1h-1zM10 5h1v1h-1zM2 6h1v1h-1zM4 6h1v1h-1zM6 6h1v1h-1zM8 6h1v1h-1zM10 6h1v1h-1zM0 7h2v1h-2zM4 7h1v1h-1zM8 7h1v1h-1zM10 7h1v1h-1zM1 8h1v1h-1zM3 8h1v1h-1zM5 8h1v1h-1zM10 8h1v1h-1zM1 9h2v1h-2zM6 9h1v1h-1zM10 9h1v1h-1zM1 10h1v1h-1zM8 10h3v1h-3zM14 0h7v1h-7zM14 1h1v1h-1zM20 1h1v1h-1zM14 2h7v1h-7zM14 3h1v1h-1zM20 3h1v1h-1zM12 4h11v1h-11zM14 5h1v1h-1zM17 5h1v1h-1zM20 5h1v1h-1zM14 6h7v1h-7zM14 7h1v1h-1zM17 7h1v1h-1zM20 7h1v1h-1zM13 8h9v1h-9zM17 9h1v1h-1zM12 10h11v1h-11zM29 0h1v1h-1zM24 1h11v1h-11zM27 3h5v1h-5zM27 4h1v1h-1zM31 4h1v1h-1zM25 5h9v1h-9zM25 6h1v1h-1zM33 6h1v1h-1zM25 7h1v1h-1zM27 7h5v1h-5zM33 7h1v1h-1zM25 8h1v1h-1zM27 8h1v1h-1zM31 8h1v1h-1zM33 8h1v1h-1zM25 9h1v1h-1zM27 9h5v1h-5zM33 9h1v1h-1zM25 10h1v1h-1zM32 10h2v1h-2zM41 0h1v1h-1zM37 1h10v1h-10zM37 2h1v1h-1zM40 2h1v1h-1zM43 2h1v1h-1zM37 3h9v1h-9zM37 4h1v1h-1zM40 4h1v1h-1zM43 4h1v1h-1zM37 5h1v1h-1zM40 5h4v1h-4zM37 6h1v1h-1zM37 7h1v1h-1zM39 7h6v1h-6zM37 8h1v1h-1zM40 8h1v1h-1zM43 8h1v1h-1zM36 9h1v1h-1zM41 9h2v1h-2zM36 10h1v1h-1zM38 10h3v1h-3zM43 10h3v1h-3z"/></svg>
<span class="t" style="left:879.0px;top:330px;font-size:12px;line-height:14px;color:#000;transform:scaleX(1.800);transform-origin:0 0;">:</span>
<div class="edit" style="left:904px;top:323px;width:59px;height:22px;background:#f0f0f0"></div>
<svg class="bt" style="left:1014px;top:330px" width="50" height="14" viewBox="0 -1 50 14" shape-rendering="crispEdges" role="img" aria-label="基准高度"><title>基准高度</title><path fill="#000" d="M3 0h1v1h-1zM7 0h1v1h-1zM1 1h9v1h-9zM3 2h1v1h-1zM7 2h1v1h-1zM3 3h3v1h-3zM7 3h1v1h-1zM3 4h1v1h-1zM5 4h3v1h-3zM3 5h1v1h-1zM7 5h1v1h-1zM0 6h11v1h-11zM2 7h1v1h-1zM5 7h1v1h-1zM8 7h1v1h-1zM0 8h2v1h-2zM3 8h5v1h-5zM9 8h2v1h-2zM5 9h1v1h-1zM0 10h11v1h-11zM16 0h1v1h-1zM18 0h1v1h-1zM12 1h1v1h-1zM16 1h1v1h-1zM19 1h1v1h-1zM13 2h1v1h-1zM16 2h7v1h-7zM13 3h1v1h-1zM15 3h2v1h-2zM19 3h1v1h-1zM16 4h1v1h-1zM19 4h1v1h-1zM14 5h1v1h-1zM16 5h6v1h-6zM14 6h1v1h-1zM16 6h1v1h-1zM19 6h1v1h-1zM12 7h2v1h-2zM16 7h6v1h-6zM13 8h1v1h-1zM16 8h1v1h-1zM19 8h1v1h-1zM13 9h1v1h-1zM16 9h1v1h-1zM19 9h1v1h-1zM13 10h1v1h-1zM16 10h7v1h-7zM29 0h1v1h-1zM24 1h11v1h-11zM27 3h5v1h-5zM27 4h1v1h-1zM31 4h1v1h-1zM25 5h9v1h-9zM25 6h1v1h-1zM33 6h1v1h-1zM25 7h1v1h-1zM27 7h5v1h-5zM33 7h1v1h-1zM25 8h1v1h-1zM27 8h1v1h-1zM31 8h1v1h-1zM33 8h1v1h-1zM25 9h1v1h-1zM27 9h5v1h-5zM33 9h1v1h-1zM25 10h1v1h-1zM32 10h2v1h-2zM41 0h1v1h-1zM37 1h10v1h-10zM37 2h1v1h-1zM40 2h1v1h-1zM43 2h1v1h-1zM37 3h9v1h-9zM37 4h1v1h-1zM40 4h1v1h-1zM43 4h1v1h-1zM37 5h1v1h-1zM40 5h4v1h-4zM37 6h1v1h-1zM37 7h1v1h-1zM39 7h6v1h-6zM37 8h1v1h-1zM40 8h1v1h-1zM43 8h1v1h-1zM36 9h1v1h-1zM41 9h2v1h-2zM36 10h1v1h-1zM38 10h3v1h-3zM43 10h3v1h-3z"/></svg>
<span class="t" style="left:1062.0px;top:330px;font-size:12px;line-height:14px;color:#000;transform:scaleX(1.800);transform-origin:0 0;">:</span>
<div class="edit" style="left:1084px;top:323px;width:59px;height:22px;background:#f0f0f0"></div>
<div style="left:826px;top:387px;width:332px;height:142px;border:1px solid #a0a0a0;border-right:none;border-bottom:none;box-shadow:inset 1px 1px 0 #fff"></div>
<div style="left:826px;top:527px;width:332px;height:2px;background:linear-gradient(#a0a0a0 50%,#fff 50%)"></div>
<div style="left:833px;top:382px;width:52px;height:13px;background:#f0f0f0"></div>
<svg class="bt" style="left:835px;top:382px" width="50" height="14" viewBox="0 -1 50 14" shape-rendering="crispEdges" role="img" aria-label="其他测量"><title>其他测量</title><path fill="#000" d="M3 0h1v1h-1zM7 0h1v1h-1zM1 1h9v1h-9zM3 2h1v1h-1zM7 2h1v1h-1zM3 3h5v1h-5zM3 4h1v1h-1zM7 4h1v1h-1zM3 5h5v1h-5zM3 6h1v1h-1zM7 6h1v1h-1zM0 7h11v1h-11zM3 8h1v1h-1zM7 8h1v1h-1zM2 9h1v1h-1zM8 9h1v1h-1zM0 10h2v1h-2zM9 10h1v1h-1zM15 0h1v1h-1zM19 0h1v1h-1zM15 1h1v1h-1zM19 1h1v1h-1zM14 2h1v1h-1zM17 2h1v1h-1zM19 2h1v1h-1zM21 2h1v1h-1zM14 3h1v1h-1zM17 3h1v1h-1zM19 3h3v1h-3zM13 4h2v1h-2zM16 4h4v1h-4zM21 4h1v1h-1zM12 5h1v1h-1zM14 5h1v1h-1zM17 5h1v1h-1zM19 5h1v1h-1zM21 5h1v1h-1zM14 6h1v1h-1zM17 6h1v1h-1zM19 6h1v1h-1zM21 6h1v1h-1zM14 7h1v1h-1zM17 7h1v1h-1zM19 7h2v1h-2zM14 8h1v1h-1zM17 8h1v1h-1zM19 8h1v1h-1zM22 8h1v1h-1zM14 9h1v1h-1zM17 9h1v1h-1zM22 9h1v1h-1zM14 10h1v1h-1zM18 10h5v1h-5zM24 0h1v1h-1zM26 0h5v1h-5zM34 0h1v1h-1zM25 1h2v1h-2zM30 1h1v1h-1zM32 1h1v1h-1zM34 1h1v1h-1zM26 2h1v1h-1zM28 2h1v1h-1zM30 2h1v1h-1zM32 2h1v1h-1zM34 2h1v1h-1zM24 3h1v1h-1zM26 3h1v1h-1zM28 3h1v1h-1zM30 3h1v1h-1zM32 3h1v1h-1zM34 3h1v1h-1zM25 4h2v1h-2zM28 4h1v1h-1zM30 4h1v1h-1zM32 4h1v1h-1zM34 4h1v1h-1zM26 5h1v1h-1zM28 5h1v1h-1zM30 5h1v1h-1zM32 5h1v1h-1zM34 5h1v1h-1zM26 6h1v1h-1zM28 6h1v1h-1zM30 6h1v1h-1zM32 6h1v1h-1zM34 6h1v1h-1zM24 7h2v1h-2zM28 7h1v1h-1zM32 7h1v1h-1zM34 7h1v1h-1zM25 8h1v1h-1zM27 8h1v1h-1zM29 8h1v1h-1zM34 8h1v1h-1zM25 9h2v1h-2zM30 9h1v1h-1zM34 9h1v1h-1zM25 10h1v1h-1zM32 10h3v1h-3zM38 0h7v1h-7zM38 1h1v1h-1zM44 1h1v1h-1zM38 2h7v1h-7zM38 3h1v1h-1zM44 3h1v1h-1zM36 4h11v1h-11zM38 5h1v1h-1zM41 5h1v1h-1zM44 5h1v1h-1zM38 6h7v1h-7zM38 7h1v1h-1zM41 7h1v1h-1zM44 7h1v1h-1zM37 8h9v1h-9zM41 9h1v1h-1zM36 10h11v1h-11z"/></svg>
<div class="btn" style="left:1038px;top:396px;width:75px;height:23px;background:#f0f0f0"></div>
<svg class="bt" style="left:1051px;top:401px" width="50" height="14" viewBox="0 -1 50 14" shape-rendering="crispEdges" role="img" aria-label="详细设置"><title>详细设置</title><path fill="#000" d="M1 0h1v1h-1zM5 0h1v1h-1zM9 0h1v1h-1zM2 1h1v1h-1zM6 1h1v1h-1zM8 1h1v1h-1zM4 2h7v1h-7zM0 3h3v1h-3zM7 3h1v1h-1zM2 4h1v1h-1zM5 4h5v1h-5zM2 5h1v1h-1zM7 5h1v1h-1zM2 6h1v1h-1zM7 6h1v1h-1zM2 7h1v1h-1zM4 7h7v1h-7zM2 8h2v1h-2zM7 8h1v1h-1zM2 9h1v1h-1zM7 9h1v1h-1zM7 10h1v1h-1zM14 0h1v1h-1zM14 1h1v1h-1zM17 1h6v1h-6zM13 2h1v1h-1zM17 2h1v1h-1zM20 2h1v1h-1zM22 2h1v1h-1zM13 3h1v1h-1zM15 3h1v1h-1zM17 3h1v1h-1zM20 3h1v1h-1zM22 3h1v1h-1zM12 4h3v1h-3zM17 4h1v1h-1zM20 4h1v1h-1zM22 4h1v1h-1zM14 5h1v1h-1zM17 5h6v1h-6zM13 6h1v1h-1zM17 6h1v1h-1zM20 6h1v1h-1zM22 6h1v1h-1zM12 7h4v1h-4zM17 7h1v1h-1zM20 7h1v1h-1zM22 7h1v1h-1zM17 8h1v1h-1zM20 8h1v1h-1zM22 8h1v1h-1zM14 9h2v1h-2zM17 9h6v1h-6zM12 10h2v1h-2zM17 10h1v1h-1zM22 10h1v1h-1zM25 0h1v1h-1zM29 0h4v1h-4zM26 1h1v1h-1zM29 1h1v1h-1zM32 1h1v1h-1zM29 2h1v1h-1zM32 2h1v1h-1zM28 3h1v1h-1zM32 3h3v1h-3zM24 4h3v1h-3zM26 5h1v1h-1zM28 5h6v1h-6zM26 6h1v1h-1zM29 6h1v1h-1zM33 6h1v1h-1zM26 7h1v1h-1zM30 7h1v1h-1zM32 7h1v1h-1zM26 8h2v1h-2zM31 8h1v1h-1zM26 9h1v1h-1zM30 9h1v1h-1zM32 9h1v1h-1zM27 10h3v1h-3zM33 10h2v1h-2zM37 0h9v1h-9zM37 1h1v1h-1zM40 1h1v1h-1zM42 1h1v1h-1zM45 1h1v1h-1zM37 2h9v1h-9zM41 3h1v1h-1zM36 4h11v1h-11zM38 5h1v1h-1zM44 5h1v1h-1zM38 6h7v1h-7zM38 7h1v1h-1zM44 7h1v1h-1zM38 8h7v1h-7zM38 9h1v1h-1zM44 9h1v1h-1zM36 10h11v1h-11z"/></svg>
<div class="btn" style="left:832px;top:417px;width:75px;height:23px;background:#f0f0f0"></div>
<svg class="bt" style="left:845px;top:422px" width="50" height="14" viewBox="0 -1 50 14" shape-rendering="crispEdges" role="img" aria-label="测量模式"><title>测量模式</title><path fill="#000" d="M0 0h1v1h-1zM2 0h5v1h-5zM10 0h1v1h-1zM1 1h2v1h-2zM6 1h1v1h-1zM8 1h1v1h-1zM10 1h1v1h-1zM2 2h1v1h-1zM4 2h1v1h-1zM6 2h1v1h-1zM8 2h1v1h-1zM10 2h1v1h-1zM0 3h1v1h-1zM2 3h1v1h-1zM4 3h1v1h-1zM6 3h1v1h-1zM8 3h1v1h-1zM10 3h1v1h-1zM1 4h2v1h-2zM4 4h1v1h-1zM6 4h1v1h-1zM8 4h1v1h-1zM10 4h1v1h-1zM2 5h1v1h-1zM4 5h1v1h-1zM6 5h1v1h-1zM8 5h1v1h-1zM10 5h1v1h-1zM2 6h1v1h-1zM4 6h1v1h-1zM6 6h1v1h-1zM8 6h1v1h-1zM10 6h1v1h-1zM0 7h2v1h-2zM4 7h1v1h-1zM8 7h1v1h-1zM10 7h1v1h-1zM1 8h1v1h-1zM3 8h1v1h-1zM5 8h1v1h-1zM10 8h1v1h-1zM1 9h2v1h-2zM6 9h1v1h-1zM10 9h1v1h-1zM1 10h1v1h-1zM8 10h3v1h-3zM14 0h7v1h-7zM14 1h1v1h-1zM20 1h1v1h-1zM14 2h7v1h-7zM14 3h1v1h-1zM20 3h1v1h-1zM12 4h11v1h-11zM14 5h1v1h-1zM17 5h1v1h-1zM20 5h1v1h-1zM14 6h7v1h-7zM14 7h1v1h-1zM17 7h1v1h-1zM20 7h1v1h-1zM13 8h9v1h-9zM17 9h1v1h-1zM12 10h11v1h-11zM26 0h1v1h-1zM30 0h1v1h-1zM32 0h1v1h-1zM26 1h1v1h-1zM28 1h7v1h-7zM24 2h4v1h-4zM30 2h1v1h-1zM32 2h1v1h-1zM26 3h1v1h-1zM29 3h5v1h-5zM26 4h2v1h-2zM29 4h1v1h-1zM33 4h1v1h-1zM25 5h2v1h-2zM28 5h6v1h-6zM25 6h2v1h-2zM29 6h1v1h-1zM33 6h1v1h-1zM24 7h1v1h-1zM26 7h1v1h-1zM28 7h7v1h-7zM26 8h1v1h-1zM31 8h1v1h-1zM26 9h1v1h-1zM30 9h1v1h-1zM32 9h1v1h-1zM26 10h1v1h-1zM28 10h2v1h-2zM33 10h2v1h-2zM42 0h1v1h-1zM44 0h1v1h-1zM42 1h1v1h-1zM45 1h1v1h-1zM42 2h1v1h-1zM36 3h11v1h-11zM42 4h1v1h-1zM37 5h4v1h-4zM42 5h1v1h-1zM39 6h1v1h-1zM42 6h1v1h-1zM39 7h1v1h-1zM43 7h1v1h-1zM39 8h1v1h-1zM43 8h1v1h-1zM46 8h1v1h-1zM39 9h2v1h-2zM44 9h1v1h-1zM46 9h1v1h-1zM36 10h3v1h-3zM45 10h2v1h-2z"/></svg>
<div class="edit" style="left:931px;top:417px;width:59px;height:22px;background:#f0f0f0"></div>
<svg class="bt" style="left:935px;top:420px" width="26" height="14" viewBox="0 -1 26 14" shape-rendering="crispEdges" role="img" aria-label="宽度"><title>宽度</title><path fill="#000" d="M5 0h1v1h-1zM0 1h11v1h-11zM0 2h1v1h-1zM3 2h1v1h-1zM7 2h1v1h-1zM10 2h1v1h-1zM1 3h9v1h-9zM3 4h1v1h-1zM7 4h1v1h-1zM2 5h7v1h-7zM2 6h1v1h-1zM5 6h1v1h-1zM8 6h1v1h-1zM2 7h1v1h-1zM5 7h1v1h-1zM8 7h1v1h-1zM2 8h1v1h-1zM4 8h1v1h-1zM6 8h1v1h-1zM8 8h1v1h-1zM10 8h1v1h-1zM3 9h1v1h-1zM6 9h1v1h-1zM10 9h1v1h-1zM0 10h3v1h-3zM7 10h4v1h-4zM17 0h1v1h-1zM13 1h10v1h-10zM13 2h1v1h-1zM16 2h1v1h-1zM19 2h1v1h-1zM13 3h9v1h-9zM13 4h1v1h-1zM16 4h1v1h-1zM19 4h1v1h-1zM13 5h1v1h-1zM16 5h4v1h-4zM13 6h1v1h-1zM13 7h1v1h-1zM15 7h6v1h-6zM13 8h1v1h-1zM16 8h1v1h-1zM19 8h1v1h-1zM12 9h1v1h-1zM17 9h2v1h-2zM12 10h1v1h-1zM14 10h3v1h-3zM19 10h3v1h-3z"/></svg>
<div style="left:1038px;top:438px;width:76px;height:23px;background:#1a1a1a"></div>
<div class="btn" style="left:1039px;top:439px;width:74px;height:21px;background:#f0f0f0"></div>
<svg class="bt" style="left:1052px;top:443px" width="50" height="14" viewBox="0 -1 50 14" shape-rendering="crispEdges" role="img" aria-label="计算结果"><title>计算结果</title><path fill="#000" d="M1 0h1v1h-1zM7 0h1v1h-1zM2 1h1v1h-1zM7 1h1v1h-1zM7 2h1v1h-1zM4 3h7v1h-7zM0 4h3v1h-3zM7 4h1v1h-1zM2 5h1v1h-1zM7 5h1v1h-1zM2 6h1v1h-1zM7 6h1v1h-1zM2 7h1v1h-1zM4 7h1v1h-1zM7 7h1v1h-1zM2 8h2v1h-2zM7 8h1v1h-1zM2 9h1v1h-1zM7 9h1v1h-1zM7 10h1v1h-1zM13 0h4v1h-4zM18 0h5v1h-5zM13 1h1v1h-1zM15 1h1v1h-1zM18 1h1v1h-1zM21 1h1v1h-1zM12 2h1v1h-1zM14 2h7v1h-7zM14 3h1v1h-1zM20 3h1v1h-1zM14 4h7v1h-7zM14 5h1v1h-1zM20 5h1v1h-1zM14 6h7v1h-7zM15 7h1v1h-1zM19 7h1v1h-1zM12 8h11v1h-11zM15 9h1v1h-1zM19 9h1v1h-1zM13 10h2v1h-2zM19 10h1v1h-1zM26 0h1v1h-1zM31 0h1v1h-1zM26 1h1v1h-1zM31 1h1v1h-1zM25 2h1v1h-1zM28 2h7v1h-7zM25 3h1v1h-1zM27 3h1v1h-1zM31 3h1v1h-1zM24 4h3v1h-3zM29 4h5v1h-5zM26 5h1v1h-1zM25 6h1v1h-1zM29 6h5v1h-5zM24 7h4v1h-4zM29 7h1v1h-1zM33 7h1v1h-1zM28 8h2v1h-2zM33 8h1v1h-1zM26 9h2v1h-2zM29 9h5v1h-5zM24 10h2v1h-2zM29 10h1v1h-1zM33 10h1v1h-1zM38 0h7v1h-7zM38 1h1v1h-1zM41 1h1v1h-1zM44 1h1v1h-1zM38 2h7v1h-7zM38 3h1v1h-1zM41 3h1v1h-1zM44 3h1v1h-1zM38 4h7v1h-7zM41 5h1v1h-1zM36 6h11v1h-11zM40 7h3v1h-3zM39 8h1v1h-1zM41 8h1v1h-1zM43 8h1v1h-1zM38 9h1v1h-1zM41 9h1v1h-1zM44 9h1v1h-1zM36 10h2v1h-2zM41 10h1v1h-1zM45 10h2v1h-2z"/></svg>
<div class="btn" style="left:832px;top:456px;width:75px;height:23px;background:#f0f0f0"></div>
<svg class="bt" style="left:839px;top:461px" width="62" height="14" viewBox="0 -1 62 14" shape-rendering="crispEdges" role="img" aria-label="测量区特征"><title>测量区特征</title><path fill="#000" d="M0 0h1v1h-1zM2 0h5v1h-5zM10 0h1v1h-1zM1 1h2v1h-2zM6 1h1v1h-1zM8 1h1v1h-1zM10 1h1v1h-1zM2 2h1v1h-1zM4 2h1v1h-1zM6 2h1v1h-1zM8 2h1v1h-1zM10 2h1v1h-1zM0 3h1v1h-1zM2 3h1v1h-1zM4 3h1v1h-1zM6 3h1v1h-1zM8 3h1v1h-1zM10 3h1v1h-1zM1 4h2v1h-2zM4 4h1v1h-1zM6 4h1v1h-1zM8 4h1v1h-1zM10 4h1v1h-1zM2 5h1v1h-1zM4 5h1v1h-1zM6 5h1v1h-1zM8 5h1v1h-1zM10 5h1v1h-1zM2 6h1v1h-1zM4 6h1v1h-1zM6 6h1v1h-1zM8 6h1v1h-1zM10 6h1v1h-1zM0 7h2v1h-2zM4 7h1v1h-1zM8 7h1v1h-1zM10 7h1v1h-1zM1 8h1v1h-1zM3 8h1v1h-1zM5 8h1v1h-1zM10 8h1v1h-1zM1 9h2v1h-2zM6 9h1v1h-1zM10 9h1v1h-1zM1 10h1v1h-1zM8 10h3v1h-3zM14 0h7v1h-7zM14 1h1v1h-1zM20 1h1v1h-1zM14 2h7v1h-7zM14 3h1v1h-1zM20 3h1v1h-1zM12 4h11v1h-11zM14 5h1v1h-1zM17 5h1v1h-1zM20 5h1v1h-1zM14 6h7v1h-7zM14 7h1v1h-1zM17 7h1v1h-1zM20 7h1v1h-1zM13 8h9v1h-9zM17 9h1v1h-1zM12 10h11v1h-11zM25 0h9v1h-9zM25 1h1v1h-1zM25 2h1v1h-1zM27 2h1v1h-1zM32 2h1v1h-1zM25 3h1v1h-1zM28 3h1v1h-1zM32 3h1v1h-1zM25 4h1v1h-1zM29 4h1v1h-1zM31 4h1v1h-1zM25 5h1v1h-1zM30 5h1v1h-1zM25 6h1v1h-1zM29 6h1v1h-1zM31 6h1v1h-1zM25 7h1v1h-1zM28 7h1v1h-1zM32 7h1v1h-1zM25 8h1v1h-1zM27 8h1v1h-1zM32 8h1v1h-1zM25 9h1v1h-1zM25 10h10v1h-10zM38 0h1v1h-1zM43 0h1v1h-1zM36 1h1v1h-1zM38 1h1v1h-1zM41 1h5v1h-5zM36 2h4v1h-4zM43 2h1v1h-1zM36 3h1v1h-1zM38 3h1v1h-1zM43 3h1v1h-1zM36 4h1v1h-1zM38 4h1v1h-1zM40 4h7v1h-7zM38 5h2v1h-2zM44 5h1v1h-1zM37 6h2v1h-2zM40 6h7v1h-7zM36 7h1v1h-1zM38 7h1v1h-1zM41 7h1v1h-1zM44 7h1v1h-1zM38 8h1v1h-1zM42 8h1v1h-1zM44 8h1v1h-1zM38 9h1v1h-1zM44 9h1v1h-1zM38 10h1v1h-1zM42 10h3v1h-3zM50 0h1v1h-1zM50 1h1v1h-1zM52 1h7v1h-7zM49 2h1v1h-1zM55 2h1v1h-1zM48 3h1v1h-1zM51 3h1v1h-1zM55 3h1v1h-1zM50 4h1v1h-1zM55 4h1v1h-1zM49 5h2v1h-2zM53 5h1v1h-1zM55 5h4v1h-4zM48 6h1v1h-1zM50 6h1v1h-1zM53 6h1v1h-1zM55 6h1v1h-1zM50 7h1v1h-1zM53 7h1v1h-1zM55 7h1v1h-1zM50 8h1v1h-1zM53 8h1v1h-1zM55 8h1v1h-1zM50 9h1v1h-1zM53 9h1v1h-1zM55 9h1v1h-1zM50 10h9v1h-9z"/></svg>
<div class="edit" style="left:931px;top:458px;width:59px;height:21px;background:#f0f0f0"></div>
<svg class="bt" style="left:935px;top:460px" width="38" height="14" viewBox="0 -1 38 14" shape-rendering="crispEdges" role="img" aria-label="弯曲点"><title>弯曲点</title><path fill="#000" d="M5 0h1v1h-1zM0 1h11v1h-11zM2 2h1v1h-1zM4 2h1v1h-1zM7 2h1v1h-1zM9 2h1v1h-1zM1 3h1v1h-1zM4 3h1v1h-1zM7 3h1v1h-1zM10 3h1v1h-1zM0 4h1v1h-1zM2 4h8v1h-8zM9 5h1v1h-1zM1 6h8v1h-8zM1 7h1v1h-1zM1 8h9v1h-9zM9 9h1v1h-1zM6 10h3v1h-3zM16 0h1v1h-1zM19 0h1v1h-1zM16 1h1v1h-1zM19 1h1v1h-1zM13 2h10v1h-10zM13 3h1v1h-1zM16 3h1v1h-1zM19 3h1v1h-1zM22 3h1v1h-1zM13 4h1v1h-1zM16 4h1v1h-1zM19 4h1v1h-1zM22 4h1v1h-1zM13 5h1v1h-1zM16 5h1v1h-1zM19 5h1v1h-1zM22 5h1v1h-1zM13 6h10v1h-10zM13 7h1v1h-1zM16 7h1v1h-1zM19 7h1v1h-1zM22 7h1v1h-1zM13 8h1v1h-1zM16 8h1v1h-1zM19 8h1v1h-1zM22 8h1v1h-1zM13 9h10v1h-10zM13 10h1v1h-1zM22 10h1v1h-1zM29 0h1v1h-1zM29 1h1v1h-1zM29 2h5v1h-5zM29 3h1v1h-1zM26 4h7v1h-7zM26 5h1v1h-1zM32 5h1v1h-1zM26 6h1v1h-1zM32 6h1v1h-1zM26 7h7v1h-7zM25 9h1v1h-1zM27 9h1v1h-1zM30 9h1v1h-1zM33 9h1v1h-1zM24 10h1v1h-1zM28 10h1v1h-1zM31 10h1v1h-1zM34 10h1v1h-1z"/></svg>
<div class="edit" style="left:1059px;top:464px;width:59px;height:22px;background:#f0f0f0"></div>
<span class="t" style="left:1063.5px;top:468px;font-size:11px;line-height:13px;letter-spacing:-.1px">11.400<span style="position:static;display:inline-block;transform:scaleX(.85);transform-origin:0 50%">mm</span></span>
<div class="btn" style="left:832px;top:484px;width:75px;height:23px;background:#f0f0f0"></div>
<svg class="bt" style="left:839px;top:489px" width="62" height="14" viewBox="0 -1 62 14" shape-rendering="crispEdges" role="img" aria-label="基准区特征"><title>基准区特征</title><path fill="#000" d="M3 0h1v1h-1zM7 0h1v1h-1zM1 1h9v1h-9zM3 2h1v1h-1zM7 2h1v1h-1zM3 3h3v1h-3zM7 3h1v1h-1zM3 4h1v1h-1zM5 4h3v1h-3zM3 5h1v1h-1zM7 5h1v1h-1zM0 6h11v1h-11zM2 7h1v1h-1zM5 7h1v1h-1zM8 7h1v1h-1zM0 8h2v1h-2zM3 8h5v1h-5zM9 8h2v1h-2zM5 9h1v1h-1zM0 10h11v1h-11zM16 0h1v1h-1zM18 0h1v1h-1zM12 1h1v1h-1zM16 1h1v1h-1zM19 1h1v1h-1zM13 2h1v1h-1zM16 2h7v1h-7zM13 3h1v1h-1zM15 3h2v1h-2zM19 3h1v1h-1zM16 4h1v1h-1zM19 4h1v1h-1zM14 5h1v1h-1zM16 5h6v1h-6zM14 6h1v1h-1zM16 6h1v1h-1zM19 6h1v1h-1zM12 7h2v1h-2zM16 7h6v1h-6zM13 8h1v1h-1zM16 8h1v1h-1zM19 8h1v1h-1zM13 9h1v1h-1zM16 9h1v1h-1zM19 9h1v1h-1zM13 10h1v1h-1zM16 10h7v1h-7zM25 0h9v1h-9zM25 1h1v1h-1zM25 2h1v1h-1zM27 2h1v1h-1zM32 2h1v1h-1zM25 3h1v1h-1zM28 3h1v1h-1zM32 3h1v1h-1zM25 4h1v1h-1zM29 4h1v1h-1zM31 4h1v1h-1zM25 5h1v1h-1zM30 5h1v1h-1zM25 6h1v1h-1zM29 6h1v1h-1zM31 6h1v1h-1zM25 7h1v1h-1zM28 7h1v1h-1zM32 7h1v1h-1zM25 8h1v1h-1zM27 8h1v1h-1zM32 8h1v1h-1zM25 9h1v1h-1zM25 10h10v1h-10zM38 0h1v1h-1zM43 0h1v1h-1zM36 1h1v1h-1zM38 1h1v1h-1zM41 1h5v1h-5zM36 2h4v1h-4zM43 2h1v1h-1zM36 3h1v1h-1zM38 3h1v1h-1zM43 3h1v1h-1zM36 4h1v1h-1zM38 4h1v1h-1zM40 4h7v1h-7zM38 5h2v1h-2zM44 5h1v1h-1zM37 6h2v1h-2zM40 6h7v1h-7zM36 7h1v1h-1zM38 7h1v1h-1zM41 7h1v1h-1zM44 7h1v1h-1zM38 8h1v1h-1zM42 8h1v1h-1zM44 8h1v1h-1zM38 9h1v1h-1zM44 9h1v1h-1zM38 10h1v1h-1zM42 10h3v1h-3zM50 0h1v1h-1zM50 1h1v1h-1zM52 1h7v1h-7zM49 2h1v1h-1zM55 2h1v1h-1zM48 3h1v1h-1zM51 3h1v1h-1zM55 3h1v1h-1zM50 4h1v1h-1zM55 4h1v1h-1zM49 5h2v1h-2zM53 5h1v1h-1zM55 5h4v1h-4zM48 6h1v1h-1zM50 6h1v1h-1zM53 6h1v1h-1zM55 6h1v1h-1zM50 7h1v1h-1zM53 7h1v1h-1zM55 7h1v1h-1zM50 8h1v1h-1zM53 8h1v1h-1zM55 8h1v1h-1zM50 9h1v1h-1zM53 9h1v1h-1zM55 9h1v1h-1zM50 10h9v1h-9z"/></svg>
<div class="edit" style="left:931px;top:484px;width:59px;height:21px;background:#f0f0f0"></div>
<svg class="bt" style="left:935px;top:486px" width="38" height="14" viewBox="0 -1 38 14" shape-rendering="crispEdges" role="img" aria-label="弯曲点"><title>弯曲点</title><path fill="#000" d="M5 0h1v1h-1zM0 1h11v1h-11zM2 2h1v1h-1zM4 2h1v1h-1zM7 2h1v1h-1zM9 2h1v1h-1zM1 3h1v1h-1zM4 3h1v1h-1zM7 3h1v1h-1zM10 3h1v1h-1zM0 4h1v1h-1zM2 4h8v1h-8zM9 5h1v1h-1zM1 6h8v1h-8zM1 7h1v1h-1zM1 8h9v1h-9zM9 9h1v1h-1zM6 10h3v1h-3zM16 0h1v1h-1zM19 0h1v1h-1zM16 1h1v1h-1zM19 1h1v1h-1zM13 2h10v1h-10zM13 3h1v1h-1zM16 3h1v1h-1zM19 3h1v1h-1zM22 3h1v1h-1zM13 4h1v1h-1zM16 4h1v1h-1zM19 4h1v1h-1zM22 4h1v1h-1zM13 5h1v1h-1zM16 5h1v1h-1zM19 5h1v1h-1zM22 5h1v1h-1zM13 6h10v1h-10zM13 7h1v1h-1zM16 7h1v1h-1zM19 7h1v1h-1zM22 7h1v1h-1zM13 8h1v1h-1zM16 8h1v1h-1zM19 8h1v1h-1zM22 8h1v1h-1zM13 9h10v1h-10zM13 10h1v1h-1zM22 10h1v1h-1zM29 0h1v1h-1zM29 1h1v1h-1zM29 2h5v1h-5zM29 3h1v1h-1zM26 4h7v1h-7zM26 5h1v1h-1zM32 5h1v1h-1zM26 6h1v1h-1zM32 6h1v1h-1zM26 7h7v1h-7zM25 9h1v1h-1zM27 9h1v1h-1zM30 9h1v1h-1zM33 9h1v1h-1zM24 10h1v1h-1zM28 10h1v1h-1zM31 10h1v1h-1zM34 10h1v1h-1z"/></svg>
<div class="edit" style="left:1015px;top:494px;width:59px;height:21px;background:#f0f0f0"></div>
<span class="t" style="left:1019.5px;top:497px;font-size:11px;line-height:13px;letter-spacing:-.1px">5.836<span style="position:static;display:inline-block;transform:scaleX(.85);transform-origin:0 50%">mm</span></span>
<div class="edit" style="left:1095px;top:494px;width:59px;height:21px;background:#f0f0f0"></div>
<span class="t" style="left:1100px;top:497px;font-size:11px;line-height:13px;letter-spacing:-.1px">17.236<span style="position:static;display:inline-block;transform:scaleX(.85);transform-origin:0 50%">mm</span></span>
<div class="btn" style="left:10px;top:805px;width:60px;height:24px;background:#f0f0f0"></div>
<svg class="bt" style="left:17px;top:810px" width="14" height="14" viewBox="0 -1 14 14" shape-rendering="crispEdges" role="img" aria-label="显"><title>显</title><path fill="#000" d="M2 0h7v1h-7zM2 1h1v1h-1zM8 1h1v1h-1zM2 2h7v1h-7zM2 3h1v1h-1zM8 3h1v1h-1zM2 4h7v1h-7zM4 5h1v1h-1zM6 5h1v1h-1zM1 6h1v1h-1zM4 6h1v1h-1zM6 6h1v1h-1zM9 6h1v1h-1zM2 7h1v1h-1zM4 7h1v1h-1zM6 7h1v1h-1zM9 7h1v1h-1zM2 8h1v1h-1zM4 8h1v1h-1zM6 8h1v1h-1zM8 8h1v1h-1zM4 9h1v1h-1zM6 9h1v1h-1zM0 10h11v1h-11z"/></svg>
<div class="edit" style="left:590px;top:805px;width:60px;height:23px;background:#fff"></div>
<span class="t" style="left:618.5px;top:808px;font-size:12px;line-height:14px;transform:scaleX(.9);transform-origin:0 0">000</span>
<div class="btn" style="left:661px;top:804px;width:91px;height:25px;background:#f0f0f0"></div>
<span class="t" style="left:665.0px;top:809px;font-size:12px;line-height:14px;color:#000;transform:scaleX(1.090);transform-origin:0 0;">&lt;-</span>
<svg class="bt" style="left:677px;top:809px" width="74" height="14" viewBox="0 -1 74 14" shape-rendering="crispEdges" role="img" aria-label="查看指定轮廓"><title>查看指定轮廓</title><path fill="#000" d="M5 0h1v1h-1zM0 1h11v1h-11zM3 2h1v1h-1zM5 2h1v1h-1zM7 2h1v1h-1zM2 3h1v1h-1zM5 3h1v1h-1zM8 3h1v1h-1zM0 4h11v1h-11zM2 5h1v1h-1zM8 5h1v1h-1zM2 6h7v1h-7zM2 7h1v1h-1zM8 7h1v1h-1zM2 8h7v1h-7zM0 10h11v1h-11zM13 0h9v1h-9zM17 1h1v1h-1zM13 2h8v1h-8zM16 3h1v1h-1zM12 4h11v1h-11zM15 5h1v1h-1zM20 5h1v1h-1zM14 6h7v1h-7zM13 7h1v1h-1zM15 7h1v1h-1zM20 7h1v1h-1zM12 8h1v1h-1zM15 8h6v1h-6zM15 9h1v1h-1zM20 9h1v1h-1zM15 10h6v1h-6zM26 0h1v1h-1zM30 0h1v1h-1zM26 1h1v1h-1zM30 1h1v1h-1zM33 1h2v1h-2zM24 2h5v1h-5zM30 2h3v1h-3zM26 3h1v1h-1zM30 3h1v1h-1zM34 3h1v1h-1zM26 4h1v1h-1zM28 4h1v1h-1zM30 4h5v1h-5zM26 5h2v1h-2zM25 6h2v1h-2zM30 6h5v1h-5zM24 7h1v1h-1zM26 7h1v1h-1zM30 7h1v1h-1zM34 7h1v1h-1zM26 8h1v1h-1zM30 8h5v1h-5zM26 9h1v1h-1zM30 9h1v1h-1zM34 9h1v1h-1zM24 10h3v1h-3zM30 10h5v1h-5zM41 0h1v1h-1zM37 1h10v1h-10zM37 2h1v1h-1zM46 2h1v1h-1zM36 3h1v1h-1zM45 3h1v1h-1zM38 4h8v1h-8zM41 5h1v1h-1zM38 6h1v1h-1zM41 6h1v1h-1zM38 7h1v1h-1zM41 7h4v1h-4zM38 8h1v1h-1zM41 8h1v1h-1zM37 9h1v1h-1zM39 9h1v1h-1zM41 9h1v1h-1zM36 10h1v1h-1zM40 10h7v1h-7zM50 0h1v1h-1zM55 0h1v1h-1zM48 1h5v1h-5zM55 1h2v1h-2zM49 2h1v1h-1zM54 2h1v1h-1zM57 2h1v1h-1zM49 3h2v1h-2zM53 3h1v1h-1zM58 3h1v1h-1zM48 4h1v1h-1zM50 4h1v1h-1zM48 5h5v1h-5zM54 5h1v1h-1zM57 5h1v1h-1zM50 6h1v1h-1zM54 6h1v1h-1zM56 6h1v1h-1zM50 7h3v1h-3zM54 7h2v1h-2zM48 8h3v1h-3zM54 8h1v1h-1zM58 8h1v1h-1zM50 9h1v1h-1zM54 9h1v1h-1zM58 9h1v1h-1zM50 10h1v1h-1zM55 10h4v1h-4zM66 0h1v1h-1zM61 1h10v1h-10zM61 2h1v1h-1zM64 2h1v1h-1zM61 3h10v1h-10zM61 4h1v1h-1zM63 4h1v1h-1zM66 4h1v1h-1zM68 4h1v1h-1zM70 4h1v1h-1zM61 5h1v1h-1zM63 5h1v1h-1zM66 5h1v1h-1zM68 5h2v1h-2zM61 6h6v1h-6zM68 6h1v1h-1zM70 6h1v1h-1zM61 7h1v1h-1zM64 7h1v1h-1zM68 7h1v1h-1zM70 7h1v1h-1zM61 8h6v1h-6zM68 8h1v1h-1zM70 8h1v1h-1zM60 9h1v1h-1zM64 9h1v1h-1zM68 9h3v1h-3zM60 10h1v1h-1zM63 10h2v1h-2zM68 10h1v1h-1z"/></svg>
<svg class="bt" style="left:759px;top:815px" width="26" height="14" viewBox="0 -1 26 14" shape-rendering="crispEdges" role="img" aria-label="用时"><title>用时</title><path fill="#000" d="M1 0h9v1h-9zM1 1h1v1h-1zM5 1h1v1h-1zM9 1h1v1h-1zM1 2h1v1h-1zM5 2h1v1h-1zM9 2h1v1h-1zM1 3h9v1h-9zM1 4h1v1h-1zM5 4h1v1h-1zM9 4h1v1h-1zM1 5h1v1h-1zM5 5h1v1h-1zM9 5h1v1h-1zM1 6h9v1h-9zM1 7h1v1h-1zM5 7h1v1h-1zM9 7h1v1h-1zM1 8h1v1h-1zM5 8h1v1h-1zM9 8h1v1h-1zM0 9h1v1h-1zM5 9h1v1h-1zM9 9h1v1h-1zM0 10h1v1h-1zM5 10h1v1h-1zM8 10h2v1h-2zM20 0h1v1h-1zM12 1h4v1h-4zM20 1h1v1h-1zM12 2h1v1h-1zM15 2h8v1h-8zM12 3h1v1h-1zM15 3h1v1h-1zM20 3h1v1h-1zM12 4h1v1h-1zM15 4h1v1h-1zM17 4h1v1h-1zM20 4h1v1h-1zM12 5h4v1h-4zM18 5h1v1h-1zM20 5h1v1h-1zM12 6h1v1h-1zM15 6h1v1h-1zM18 6h1v1h-1zM20 6h1v1h-1zM12 7h1v1h-1zM15 7h1v1h-1zM20 7h1v1h-1zM12 8h1v1h-1zM15 8h1v1h-1zM20 8h1v1h-1zM12 9h4v1h-4zM20 9h1v1h-1zM18 10h3v1h-3z"/></svg>
<span class="t" style="left:783px;top:815px;font-size:12px;line-height:14px;">:</span>
<div class="edit" style="left:794px;top:804px;width:38px;height:24px;background:#f0f0f0"></div>
<span class="t" style="left:798.5px;top:807px;font-size:12px;line-height:14px;transform:scaleX(.9);transform-origin:0 0">5.44</span>
<span class="t" style="left:841px;top:814px;font-size:12px;line-height:14px;">s</span>
<div class="btn" style="left:871px;top:804px;width:88px;height:25px;background:#f0f0f0"></div>
<svg class="bt" style="left:879px;top:810px" width="74" height="14" viewBox="0 -1 74 14" shape-rendering="crispEdges" role="img" aria-label="读取轮廓数据"><title>读取轮廓数据</title><path fill="#000" d="M1 0h1v1h-1zM7 0h1v1h-1zM2 1h1v1h-1zM5 1h5v1h-5zM7 2h1v1h-1zM0 3h3v1h-3zM4 3h7v1h-7zM2 4h1v1h-1zM6 4h1v1h-1zM8 4h1v1h-1zM10 4h1v1h-1zM2 5h1v1h-1zM5 5h1v1h-1zM7 5h2v1h-2zM2 6h1v1h-1zM6 6h1v1h-1zM8 6h1v1h-1zM2 7h1v1h-1zM4 7h7v1h-7zM2 8h2v1h-2zM7 8h2v1h-2zM2 9h1v1h-1zM6 9h1v1h-1zM9 9h1v1h-1zM4 10h2v1h-2zM10 10h1v1h-1zM12 0h6v1h-6zM13 1h1v1h-1zM16 1h1v1h-1zM18 1h5v1h-5zM13 2h1v1h-1zM16 2h1v1h-1zM18 2h1v1h-1zM22 2h1v1h-1zM13 3h4v1h-4zM18 3h1v1h-1zM22 3h1v1h-1zM13 4h1v1h-1zM16 4h1v1h-1zM19 4h1v1h-1zM21 4h1v1h-1zM13 5h4v1h-4zM19 5h1v1h-1zM21 5h1v1h-1zM13 6h1v1h-1zM16 6h1v1h-1zM20 6h1v1h-1zM13 7h1v1h-1zM16 7h2v1h-2zM20 7h1v1h-1zM12 8h5v1h-5zM19 8h1v1h-1zM21 8h1v1h-1zM16 9h1v1h-1zM18 9h1v1h-1zM21 9h1v1h-1zM16 10h2v1h-2zM22 10h1v1h-1zM26 0h1v1h-1zM31 0h1v1h-1zM24 1h5v1h-5zM31 1h2v1h-2zM25 2h1v1h-1zM30 2h1v1h-1zM33 2h1v1h-1zM25 3h2v1h-2zM29 3h1v1h-1zM34 3h1v1h-1zM24 4h1v1h-1zM26 4h1v1h-1zM24 5h5v1h-5zM30 5h1v1h-1zM33 5h1v1h-1zM26 6h1v1h-1zM30 6h1v1h-1zM32 6h1v1h-1zM26 7h3v1h-3zM30 7h2v1h-2zM24 8h3v1h-3zM30 8h1v1h-1zM34 8h1v1h-1zM26 9h1v1h-1zM30 9h1v1h-1zM34 9h1v1h-1zM26 10h1v1h-1zM31 10h4v1h-4zM42 0h1v1h-1zM37 1h10v1h-10zM37 2h1v1h-1zM40 2h1v1h-1zM37 3h10v1h-10zM37 4h1v1h-1zM39 4h1v1h-1zM42 4h1v1h-1zM44 4h1v1h-1zM46 4h1v1h-1zM37 5h1v1h-1zM39 5h1v1h-1zM42 5h1v1h-1zM44 5h2v1h-2zM37 6h6v1h-6zM44 6h1v1h-1zM46 6h1v1h-1zM37 7h1v1h-1zM40 7h1v1h-1zM44 7h1v1h-1zM46 7h1v1h-1zM37 8h6v1h-6zM44 8h1v1h-1zM46 8h1v1h-1zM36 9h1v1h-1zM40 9h1v1h-1zM44 9h3v1h-3zM36 10h1v1h-1zM39 10h2v1h-2zM44 10h1v1h-1zM48 0h1v1h-1zM51 0h1v1h-1zM53 0h1v1h-1zM55 0h1v1h-1zM49 1h1v1h-1zM51 1h2v1h-2zM55 1h1v1h-1zM48 2h6v1h-6zM55 2h4v1h-4zM50 3h2v1h-2zM54 3h2v1h-2zM57 3h1v1h-1zM49 4h1v1h-1zM51 4h2v1h-2zM55 4h1v1h-1zM57 4h1v1h-1zM48 5h1v1h-1zM51 5h1v1h-1zM53 5h1v1h-1zM55 5h1v1h-1zM57 5h1v1h-1zM48 6h6v1h-6zM55 6h1v1h-1zM57 6h1v1h-1zM50 7h1v1h-1zM52 7h1v1h-1zM55 7h1v1h-1zM57 7h1v1h-1zM49 8h2v1h-2zM52 8h1v1h-1zM56 8h1v1h-1zM51 9h1v1h-1zM55 9h1v1h-1zM57 9h1v1h-1zM48 10h3v1h-3zM52 10h3v1h-3zM58 10h1v1h-1zM62 0h1v1h-1zM65 0h6v1h-6zM62 1h1v1h-1zM65 1h1v1h-1zM70 1h1v1h-1zM60 2h6v1h-6zM70 2h1v1h-1zM62 3h1v1h-1zM65 3h6v1h-6zM62 4h1v1h-1zM64 4h2v1h-2zM68 4h1v1h-1zM62 5h2v1h-2zM65 5h6v1h-6zM61 6h2v1h-2zM65 6h1v1h-1zM68 6h1v1h-1zM60 7h1v1h-1zM62 7h1v1h-1zM65 7h6v1h-6zM62 8h1v1h-1zM64 8h3v1h-3zM70 8h1v1h-1zM60 9h1v1h-1zM62 9h1v1h-1zM64 9h1v1h-1zM66 9h1v1h-1zM70 9h1v1h-1zM61 10h1v1h-1zM63 10h1v1h-1zM66 10h5v1h-5z"/></svg>
<div class="btn" style="left:969px;top:804px;width:87px;height:25px;background:#f0f0f0"></div>
<svg class="bt" style="left:979px;top:810px" width="26" height="14" viewBox="0 -1 26 14" shape-rendering="crispEdges" role="img" aria-label="保存"><title>保存</title><path fill="#000" d="M3 0h1v1h-1zM5 0h5v1h-5zM3 1h1v1h-1zM5 1h1v1h-1zM9 1h1v1h-1zM2 2h1v1h-1zM5 2h1v1h-1zM9 2h1v1h-1zM2 3h1v1h-1zM5 3h5v1h-5zM1 4h2v1h-2zM7 4h1v1h-1zM0 5h1v1h-1zM2 5h1v1h-1zM4 5h7v1h-7zM2 6h1v1h-1zM7 6h1v1h-1zM2 7h1v1h-1zM6 7h3v1h-3zM2 8h1v1h-1zM5 8h1v1h-1zM7 8h1v1h-1zM9 8h1v1h-1zM2 9h1v1h-1zM4 9h1v1h-1zM7 9h1v1h-1zM10 9h1v1h-1zM2 10h1v1h-1zM7 10h1v1h-1zM16 0h1v1h-1zM12 1h11v1h-11zM15 2h1v1h-1zM14 3h1v1h-1zM16 3h6v1h-6zM14 4h1v1h-1zM20 4h1v1h-1zM13 5h2v1h-2zM19 5h1v1h-1zM12 6h1v1h-1zM14 6h9v1h-9zM14 7h1v1h-1zM19 7h1v1h-1zM14 8h1v1h-1zM19 8h1v1h-1zM14 9h1v1h-1zM19 9h1v1h-1zM14 10h1v1h-1zM17 10h3v1h-3z"/></svg>
<span class="t" style="left:1003.0px;top:810px;font-size:12px;line-height:14px;color:#000;transform:scaleX(0.930);transform-origin:0 0;">pcd</span>
<svg class="bt" style="left:1021px;top:810px" width="26" height="14" viewBox="0 -1 26 14" shape-rendering="crispEdges" role="img" aria-label="点云"><title>点云</title><path fill="#000" d="M5 0h1v1h-1zM5 1h1v1h-1zM5 2h5v1h-5zM5 3h1v1h-1zM2 4h7v1h-7zM2 5h1v1h-1zM8 5h1v1h-1zM2 6h1v1h-1zM8 6h1v1h-1zM2 7h7v1h-7zM1 9h1v1h-1zM3 9h1v1h-1zM6 9h1v1h-1zM9 9h1v1h-1zM0 10h1v1h-1zM4 10h1v1h-1zM7 10h1v1h-1zM10 10h1v1h-1zM14 0h7v1h-7zM12 4h11v1h-11zM16 5h1v1h-1zM15 6h1v1h-1zM15 7h1v1h-1zM19 7h1v1h-1zM14 8h1v1h-1zM20 8h1v1h-1zM13 9h9v1h-9zM14 10h1v1h-1zM21 10h1v1h-1z"/></svg>
<div style="left:979px;top:786px;width:13px;height:13px;background:#fff;border:1px solid;border-color:#a0a0a0 #fff #fff #a0a0a0;box-shadow:inset 1px 1px 0 #696969,inset -1px -1px 0 #e3e3e3"></div>
<svg class="bt" style="left:997px;top:787px" width="50" height="14" viewBox="0 -1 50 14" shape-rendering="crispEdges" role="img" aria-label="循环执行"><title>循环执行</title><path fill="#000" d="M3 0h8v1h-8zM2 1h1v1h-1zM4 1h1v1h-1zM8 1h1v1h-1zM1 2h1v1h-1zM4 2h7v1h-7zM0 3h1v1h-1zM3 3h2v1h-2zM8 3h1v1h-1zM2 4h1v1h-1zM4 4h1v1h-1zM6 4h5v1h-5zM1 5h2v1h-2zM4 5h1v1h-1zM6 5h1v1h-1zM10 5h1v1h-1zM0 6h1v1h-1zM2 6h1v1h-1zM4 6h1v1h-1zM6 6h5v1h-5zM2 7h1v1h-1zM4 7h1v1h-1zM6 7h1v1h-1zM10 7h1v1h-1zM2 8h1v1h-1zM4 8h1v1h-1zM6 8h5v1h-5zM2 9h1v1h-1zM4 9h1v1h-1zM6 9h1v1h-1zM10 9h1v1h-1zM2 10h2v1h-2zM6 10h5v1h-5zM17 0h6v1h-6zM12 1h5v1h-5zM19 1h1v1h-1zM14 2h1v1h-1zM19 2h1v1h-1zM14 3h1v1h-1zM18 3h2v1h-2zM13 4h3v1h-3zM18 4h3v1h-3zM14 5h1v1h-1zM17 5h1v1h-1zM19 5h1v1h-1zM21 5h1v1h-1zM14 6h1v1h-1zM17 6h1v1h-1zM19 6h1v1h-1zM22 6h1v1h-1zM14 7h3v1h-3zM19 7h1v1h-1zM22 7h1v1h-1zM12 8h2v1h-2zM19 8h1v1h-1zM19 9h1v1h-1zM19 10h1v1h-1zM26 0h1v1h-1zM30 0h1v1h-1zM26 1h1v1h-1zM30 1h1v1h-1zM24 2h9v1h-9zM26 3h1v1h-1zM30 3h1v1h-1zM32 3h1v1h-1zM26 4h1v1h-1zM28 4h1v1h-1zM30 4h1v1h-1zM32 4h1v1h-1zM26 5h2v1h-2zM29 5h2v1h-2zM32 5h1v1h-1zM25 6h2v1h-2zM30 6h1v1h-1zM32 6h1v1h-1zM24 7h1v1h-1zM26 7h1v1h-1zM29 7h4v1h-4zM34 7h1v1h-1zM26 8h1v1h-1zM29 8h1v1h-1zM32 8h1v1h-1zM34 8h1v1h-1zM24 9h1v1h-1zM26 9h1v1h-1zM28 9h1v1h-1zM32 9h1v1h-1zM34 9h1v1h-1zM25 10h1v1h-1zM27 10h1v1h-1zM33 10h2v1h-2zM38 0h1v1h-1zM41 0h5v1h-5zM37 1h1v1h-1zM36 2h1v1h-1zM39 3h1v1h-1zM38 4h1v1h-1zM40 4h7v1h-7zM37 5h2v1h-2zM44 5h1v1h-1zM36 6h1v1h-1zM38 6h1v1h-1zM44 6h1v1h-1zM38 7h1v1h-1zM44 7h1v1h-1zM38 8h1v1h-1zM44 8h1v1h-1zM38 9h1v1h-1zM44 9h1v1h-1zM38 10h1v1h-1zM42 10h3v1h-3z"/></svg>
<div class="edit" style="left:1063px;top:777px;width:69px;height:24px;background:#f0f0f0"></div>
<span class="t" style="left:1068px;top:780px;font-size:12px;line-height:14px;transform:scaleX(.9);transform-origin:0 0">351</span>
<div style="left:8px;top:832px;width:1215px;height:24px;background:#f0f0f0"></div>
<div style="left:8px;top:832px;width:202px;height:23px;border:1px solid;border-color:#a0a0a0 #fff #fff #a0a0a0"></div>
<div style="left:210px;top:832px;width:180px;height:23px;border:1px solid;border-color:#a0a0a0 #fff #fff #a0a0a0"></div>
<div style="left:390px;top:832px;width:833px;height:23px;border:1px solid;border-color:#a0a0a0 #fff #fff #a0a0a0"></div>
<svg class="bt" style="left:10px;top:837px" width="74" height="14" viewBox="0 -1 74 14" shape-rendering="crispEdges" role="img" aria-label="轮廓提取用时"><title>轮廓提取用时</title><path fill="#000" d="M2 0h1v1h-1zM7 0h1v1h-1zM0 1h5v1h-5zM7 1h2v1h-2zM1 2h1v1h-1zM6 2h1v1h-1zM9 2h1v1h-1zM1 3h2v1h-2zM5 3h1v1h-1zM10 3h1v1h-1zM0 4h1v1h-1zM2 4h1v1h-1zM0 5h5v1h-5zM6 5h1v1h-1zM9 5h1v1h-1zM2 6h1v1h-1zM6 6h1v1h-1zM8 6h1v1h-1zM2 7h3v1h-3zM6 7h2v1h-2zM0 8h3v1h-3zM6 8h1v1h-1zM10 8h1v1h-1zM2 9h1v1h-1zM6 9h1v1h-1zM10 9h1v1h-1zM2 10h1v1h-1zM7 10h4v1h-4zM18 0h1v1h-1zM13 1h10v1h-10zM13 2h1v1h-1zM16 2h1v1h-1zM13 3h10v1h-10zM13 4h1v1h-1zM15 4h1v1h-1zM18 4h1v1h-1zM20 4h1v1h-1zM22 4h1v1h-1zM13 5h1v1h-1zM15 5h1v1h-1zM18 5h1v1h-1zM20 5h2v1h-2zM13 6h6v1h-6zM20 6h1v1h-1zM22 6h1v1h-1zM13 7h1v1h-1zM16 7h1v1h-1zM20 7h1v1h-1zM22 7h1v1h-1zM13 8h6v1h-6zM20 8h1v1h-1zM22 8h1v1h-1zM12 9h1v1h-1zM16 9h1v1h-1zM20 9h3v1h-3zM12 10h1v1h-1zM15 10h2v1h-2zM20 10h1v1h-1zM26 0h1v1h-1zM29 0h5v1h-5zM26 1h1v1h-1zM29 1h1v1h-1zM33 1h1v1h-1zM24 2h10v1h-10zM26 3h1v1h-1zM29 3h1v1h-1zM33 3h1v1h-1zM26 4h1v1h-1zM29 4h5v1h-5zM26 5h2v1h-2zM25 6h2v1h-2zM28 6h7v1h-7zM24 7h1v1h-1zM26 7h1v1h-1zM29 7h1v1h-1zM31 7h1v1h-1zM26 8h1v1h-1zM29 8h1v1h-1zM31 8h4v1h-4zM26 9h1v1h-1zM28 9h1v1h-1zM30 9h2v1h-2zM24 10h4v1h-4zM31 10h4v1h-4zM36 0h6v1h-6zM37 1h1v1h-1zM40 1h1v1h-1zM42 1h5v1h-5zM37 2h1v1h-1zM40 2h1v1h-1zM42 2h1v1h-1zM46 2h1v1h-1zM37 3h4v1h-4zM42 3h1v1h-1zM46 3h1v1h-1zM37 4h1v1h-1zM40 4h1v1h-1zM43 4h1v1h-1zM45 4h1v1h-1zM37 5h4v1h-4zM43 5h1v1h-1zM45 5h1v1h-1zM37 6h1v1h-1zM40 6h1v1h-1zM44 6h1v1h-1zM37 7h1v1h-1zM40 7h2v1h-2zM44 7h1v1h-1zM36 8h5v1h-5zM43 8h1v1h-1zM45 8h1v1h-1zM40 9h1v1h-1zM42 9h1v1h-1zM45 9h1v1h-1zM40 10h2v1h-2zM46 10h1v1h-1zM49 0h9v1h-9zM49 1h1v1h-1zM53 1h1v1h-1zM57 1h1v1h-1zM49 2h1v1h-1zM53 2h1v1h-1zM57 2h1v1h-1zM49 3h9v1h-9zM49 4h1v1h-1zM53 4h1v1h-1zM57 4h1v1h-1zM49 5h1v1h-1zM53 5h1v1h-1zM57 5h1v1h-1zM49 6h9v1h-9zM49 7h1v1h-1zM53 7h1v1h-1zM57 7h1v1h-1zM49 8h1v1h-1zM53 8h1v1h-1zM57 8h1v1h-1zM48 9h1v1h-1zM53 9h1v1h-1zM57 9h1v1h-1zM48 10h1v1h-1zM53 10h1v1h-1zM56 10h2v1h-2zM68 0h1v1h-1zM60 1h4v1h-4zM68 1h1v1h-1zM60 2h1v1h-1zM63 2h8v1h-8zM60 3h1v1h-1zM63 3h1v1h-1zM68 3h1v1h-1zM60 4h1v1h-1zM63 4h1v1h-1zM65 4h1v1h-1zM68 4h1v1h-1zM60 5h4v1h-4zM66 5h1v1h-1zM68 5h1v1h-1zM60 6h1v1h-1zM63 6h1v1h-1zM66 6h1v1h-1zM68 6h1v1h-1zM60 7h1v1h-1zM63 7h1v1h-1zM68 7h1v1h-1zM60 8h1v1h-1zM63 8h1v1h-1zM68 8h1v1h-1zM60 9h4v1h-4zM68 9h1v1h-1zM66 10h3v1h-3z"/></svg>
<span class="t" style="left:82.0px;top:838px;font-size:11px;line-height:13px;color:#000;">:0</span>
<svg class="bt" style="left:212px;top:837px" width="86" height="14" viewBox="0 -1 86 14" shape-rendering="crispEdges" role="img" aria-label="轮廓显示用时："><title>轮廓显示用时：</title><path fill="#000" d="M2 0h1v1h-1zM7 0h1v1h-1zM0 1h5v1h-5zM7 1h2v1h-2zM1 2h1v1h-1zM6 2h1v1h-1zM9 2h1v1h-1zM1 3h2v1h-2zM5 3h1v1h-1zM10 3h1v1h-1zM0 4h1v1h-1zM2 4h1v1h-1zM0 5h5v1h-5zM6 5h1v1h-1zM9 5h1v1h-1zM2 6h1v1h-1zM6 6h1v1h-1zM8 6h1v1h-1zM2 7h3v1h-3zM6 7h2v1h-2zM0 8h3v1h-3zM6 8h1v1h-1zM10 8h1v1h-1zM2 9h1v1h-1zM6 9h1v1h-1zM10 9h1v1h-1zM2 10h1v1h-1zM7 10h4v1h-4zM18 0h1v1h-1zM13 1h10v1h-10zM13 2h1v1h-1zM16 2h1v1h-1zM13 3h10v1h-10zM13 4h1v1h-1zM15 4h1v1h-1zM18 4h1v1h-1zM20 4h1v1h-1zM22 4h1v1h-1zM13 5h1v1h-1zM15 5h1v1h-1zM18 5h1v1h-1zM20 5h2v1h-2zM13 6h6v1h-6zM20 6h1v1h-1zM22 6h1v1h-1zM13 7h1v1h-1zM16 7h1v1h-1zM20 7h1v1h-1zM22 7h1v1h-1zM13 8h6v1h-6zM20 8h1v1h-1zM22 8h1v1h-1zM12 9h1v1h-1zM16 9h1v1h-1zM20 9h3v1h-3zM12 10h1v1h-1zM15 10h2v1h-2zM20 10h1v1h-1zM26 0h7v1h-7zM26 1h1v1h-1zM32 1h1v1h-1zM26 2h7v1h-7zM26 3h1v1h-1zM32 3h1v1h-1zM26 4h7v1h-7zM28 5h1v1h-1zM30 5h1v1h-1zM25 6h1v1h-1zM28 6h1v1h-1zM30 6h1v1h-1zM33 6h1v1h-1zM26 7h1v1h-1zM28 7h1v1h-1zM30 7h1v1h-1zM33 7h1v1h-1zM26 8h1v1h-1zM28 8h1v1h-1zM30 8h1v1h-1zM32 8h1v1h-1zM28 9h1v1h-1zM30 9h1v1h-1zM24 10h11v1h-11zM37 1h9v1h-9zM36 4h11v1h-11zM41 5h1v1h-1zM38 6h1v1h-1zM41 6h1v1h-1zM44 6h1v1h-1zM38 7h1v1h-1zM41 7h1v1h-1zM45 7h1v1h-1zM37 8h1v1h-1zM41 8h1v1h-1zM46 8h1v1h-1zM36 9h1v1h-1zM41 9h1v1h-1zM46 9h1v1h-1zM40 10h2v1h-2zM49 0h9v1h-9zM49 1h1v1h-1zM53 1h1v1h-1zM57 1h1v1h-1zM49 2h1v1h-1zM53 2h1v1h-1zM57 2h1v1h-1zM49 3h9v1h-9zM49 4h1v1h-1zM53 4h1v1h-1zM57 4h1v1h-1zM49 5h1v1h-1zM53 5h1v1h-1zM57 5h1v1h-1zM49 6h9v1h-9zM49 7h1v1h-1zM53 7h1v1h-1zM57 7h1v1h-1zM49 8h1v1h-1zM53 8h1v1h-1zM57 8h1v1h-1zM48 9h1v1h-1zM53 9h1v1h-1zM57 9h1v1h-1zM48 10h1v1h-1zM53 10h1v1h-1zM56 10h2v1h-2zM68 0h1v1h-1zM60 1h4v1h-4zM68 1h1v1h-1zM60 2h1v1h-1zM63 2h8v1h-8zM60 3h1v1h-1zM63 3h1v1h-1zM68 3h1v1h-1zM60 4h1v1h-1zM63 4h1v1h-1zM65 4h1v1h-1zM68 4h1v1h-1zM60 5h4v1h-4zM66 5h1v1h-1zM68 5h1v1h-1zM60 6h1v1h-1zM63 6h1v1h-1zM66 6h1v1h-1zM68 6h1v1h-1zM60 7h1v1h-1zM63 7h1v1h-1zM68 7h1v1h-1zM60 8h1v1h-1zM63 8h1v1h-1zM68 8h1v1h-1zM60 9h4v1h-4zM68 9h1v1h-1zM66 10h3v1h-3zM78 2h2v1h-2zM78 3h2v1h-2zM78 7h2v1h-2zM78 8h2v1h-2z"/></svg>
<span class="t" style="left:392.0px;top:838px;font-size:11px;line-height:13px;color:#000;">X</span>
<svg class="bt" style="left:399px;top:837px" width="26" height="14" viewBox="0 -1 26 14" shape-rendering="crispEdges" role="img" aria-label="坐标"><title>坐标</title><path fill="#000" d="M5 0h1v1h-1zM2 1h1v1h-1zM5 1h1v1h-1zM8 1h1v1h-1zM2 2h1v1h-1zM5 2h1v1h-1zM8 2h1v1h-1zM2 3h1v1h-1zM5 3h1v1h-1zM8 3h1v1h-1zM1 4h1v1h-1zM3 4h1v1h-1zM5 4h1v1h-1zM7 4h1v1h-1zM9 4h1v1h-1zM0 5h1v1h-1zM4 5h3v1h-3zM10 5h1v1h-1zM5 6h1v1h-1zM1 7h9v1h-9zM5 8h1v1h-1zM5 9h1v1h-1zM0 10h11v1h-11zM14 0h1v1h-1zM17 0h5v1h-5zM14 1h1v1h-1zM12 2h5v1h-5zM14 3h1v1h-1zM16 3h7v1h-7zM14 4h1v1h-1zM19 4h1v1h-1zM13 5h3v1h-3zM19 5h1v1h-1zM13 6h2v1h-2zM17 6h1v1h-1zM19 6h1v1h-1zM21 6h1v1h-1zM12 7h1v1h-1zM14 7h1v1h-1zM17 7h1v1h-1zM19 7h1v1h-1zM22 7h1v1h-1zM14 8h1v1h-1zM16 8h1v1h-1zM19 8h1v1h-1zM22 8h1v1h-1zM14 9h1v1h-1zM19 9h1v1h-1zM14 10h1v1h-1zM18 10h2v1h-2z"/></svg>
<span class="t" style="left:423.0px;top:838px;font-size:11px;line-height:13px;color:#000;">:601,Y</span>
<svg class="bt" style="left:455px;top:837px" width="26" height="14" viewBox="0 -1 26 14" shape-rendering="crispEdges" role="img" aria-label="坐标"><title>坐标</title><path fill="#000" d="M5 0h1v1h-1zM2 1h1v1h-1zM5 1h1v1h-1zM8 1h1v1h-1zM2 2h1v1h-1zM5 2h1v1h-1zM8 2h1v1h-1zM2 3h1v1h-1zM5 3h1v1h-1zM8 3h1v1h-1zM1 4h1v1h-1zM3 4h1v1h-1zM5 4h1v1h-1zM7 4h1v1h-1zM9 4h1v1h-1zM0 5h1v1h-1zM4 5h3v1h-3zM10 5h1v1h-1zM5 6h1v1h-1zM1 7h9v1h-9zM5 8h1v1h-1zM5 9h1v1h-1zM0 10h11v1h-11zM14 0h1v1h-1zM17 0h5v1h-5zM14 1h1v1h-1zM12 2h5v1h-5zM14 3h1v1h-1zM16 3h7v1h-7zM14 4h1v1h-1zM19 4h1v1h-1zM13 5h3v1h-3zM19 5h1v1h-1zM13 6h2v1h-2zM17 6h1v1h-1zM19 6h1v1h-1zM21 6h1v1h-1zM12 7h1v1h-1zM14 7h1v1h-1zM17 7h1v1h-1zM19 7h1v1h-1zM22 7h1v1h-1zM14 8h1v1h-1zM16 8h1v1h-1zM19 8h1v1h-1zM22 8h1v1h-1zM14 9h1v1h-1zM19 9h1v1h-1zM14 10h1v1h-1zM18 10h2v1h-2z"/></svg>
<span class="t" style="left:479.0px;top:838px;font-size:11px;line-height:13px;color:#000;">:26,</span>
<svg class="bt" style="left:497px;top:837px" width="38" height="14" viewBox="0 -1 38 14" shape-rendering="crispEdges" role="img" aria-label="灰度值"><title>灰度值</title><path fill="#000" d="M4 0h1v1h-1zM0 1h11v1h-11zM4 2h1v1h-1zM6 2h1v1h-1zM3 3h1v1h-1zM6 3h1v1h-1zM3 4h1v1h-1zM6 4h1v1h-1zM9 4h1v1h-1zM2 5h1v1h-1zM4 5h1v1h-1zM6 5h1v1h-1zM8 5h1v1h-1zM1 6h1v1h-1zM4 6h1v1h-1zM6 6h2v1h-2zM0 7h1v1h-1zM3 7h1v1h-1zM6 7h1v1h-1zM5 8h1v1h-1zM7 8h1v1h-1zM3 9h2v1h-2zM8 9h1v1h-1zM1 10h2v1h-2zM9 10h2v1h-2zM17 0h1v1h-1zM13 1h10v1h-10zM13 2h1v1h-1zM16 2h1v1h-1zM19 2h1v1h-1zM13 3h9v1h-9zM13 4h1v1h-1zM16 4h1v1h-1zM19 4h1v1h-1zM13 5h1v1h-1zM16 5h4v1h-4zM13 6h1v1h-1zM13 7h1v1h-1zM15 7h6v1h-6zM13 8h1v1h-1zM16 8h1v1h-1zM19 8h1v1h-1zM12 9h1v1h-1zM17 9h2v1h-2zM12 10h1v1h-1zM14 10h3v1h-3zM19 10h3v1h-3zM27 0h1v1h-1zM31 0h1v1h-1zM27 1h8v1h-8zM26 2h1v1h-1zM30 2h1v1h-1zM26 3h1v1h-1zM29 3h5v1h-5zM25 4h2v1h-2zM29 4h1v1h-1zM33 4h1v1h-1zM24 5h1v1h-1zM26 5h1v1h-1zM29 5h5v1h-5zM26 6h1v1h-1zM29 6h1v1h-1zM33 6h1v1h-1zM26 7h1v1h-1zM29 7h3v1h-3zM33 7h1v1h-1zM26 8h1v1h-1zM29 8h1v1h-1zM31 8h3v1h-3zM26 9h1v1h-1zM29 9h1v1h-1zM33 9h1v1h-1zM26 10h1v1h-1zM28 10h7v1h-7z"/></svg>
<span class="t" style="left:533.0px;top:838px;font-size:11px;line-height:13px;color:#000;">:4</span>
<svg class="abs" style="left:1208px;top:841px" width="15" height="15" viewBox="0 0 15 15"><path d="M1 14L14 1M6 14l8-8M11 14l3-3" stroke="#8a8a8a" stroke-width="1.2" fill="none"/></svg>
<div style="left:-1px;top:0px;width:640px;height:440px;background:#b9d1ea;border:1px solid #1f252d;border-radius:6px 6px 0 0;overflow:hidden"><div class="cap" style="left:0;top:0;width:638px;height:29px"></div><div style="left:0;top:0;width:638px;height:438px;border:1px solid rgba(255,255,255,.9);border-right-color:#a6e3f4;border-bottom-color:#a6e3f4;border-radius:5px 5px 0 0"></div></div>
<svg class="abs" style="left:8.8px;top:11.3px" width="15" height="13" viewBox="0 0 15 13"><defs><linearGradient id="ig" x1="0" y1="0" x2="1" y2="1"><stop offset="0" stop-color="#5fa79a"/><stop offset=".5" stop-color="#2f8a6c"/><stop offset="1" stop-color="#4a9a86"/></linearGradient></defs><rect x="0.5" y="0.5" width="14" height="11.8" fill="#fdfdfd" stroke="#8b929c"/><path d="M0.5 12.3V0.5" stroke="#c9d3de"/><rect x="1.7" y="2.4" width="5.6" height="8" fill="url(#ig)"/><rect x="12.2" y="2.6" width="1" height="3.9" fill="#1e1e1e"/><rect x="8.6" y="9.3" width="2.4" height=".9" fill="#a9aeb4"/></svg>
<svg class="bt" style="left:29px;top:12px" width="50" height="14" viewBox="0 -1 50 14" shape-rendering="crispEdges" role="img" aria-label="轮廓曲线"><title>轮廓曲线</title><path fill="#000" d="M2 0h1v1h-1zM7 0h1v1h-1zM0 1h5v1h-5zM7 1h2v1h-2zM1 2h1v1h-1zM6 2h1v1h-1zM9 2h1v1h-1zM1 3h2v1h-2zM5 3h1v1h-1zM10 3h1v1h-1zM0 4h1v1h-1zM2 4h1v1h-1zM0 5h5v1h-5zM6 5h1v1h-1zM9 5h1v1h-1zM2 6h1v1h-1zM6 6h1v1h-1zM8 6h1v1h-1zM2 7h3v1h-3zM6 7h2v1h-2zM0 8h3v1h-3zM6 8h1v1h-1zM10 8h1v1h-1zM2 9h1v1h-1zM6 9h1v1h-1zM10 9h1v1h-1zM2 10h1v1h-1zM7 10h4v1h-4zM18 0h1v1h-1zM13 1h10v1h-10zM13 2h1v1h-1zM16 2h1v1h-1zM13 3h10v1h-10zM13 4h1v1h-1zM15 4h1v1h-1zM18 4h1v1h-1zM20 4h1v1h-1zM22 4h1v1h-1zM13 5h1v1h-1zM15 5h1v1h-1zM18 5h1v1h-1zM20 5h2v1h-2zM13 6h6v1h-6zM20 6h1v1h-1zM22 6h1v1h-1zM13 7h1v1h-1zM16 7h1v1h-1zM20 7h1v1h-1zM22 7h1v1h-1zM13 8h6v1h-6zM20 8h1v1h-1zM22 8h1v1h-1zM12 9h1v1h-1zM16 9h1v1h-1zM20 9h3v1h-3zM12 10h1v1h-1zM15 10h2v1h-2zM20 10h1v1h-1zM28 0h1v1h-1zM31 0h1v1h-1zM28 1h1v1h-1zM31 1h1v1h-1zM25 2h10v1h-10zM25 3h1v1h-1zM28 3h1v1h-1zM31 3h1v1h-1zM34 3h1v1h-1zM25 4h1v1h-1zM28 4h1v1h-1zM31 4h1v1h-1zM34 4h1v1h-1zM25 5h1v1h-1zM28 5h1v1h-1zM31 5h1v1h-1zM34 5h1v1h-1zM25 6h10v1h-10zM25 7h1v1h-1zM28 7h1v1h-1zM31 7h1v1h-1zM34 7h1v1h-1zM25 8h1v1h-1zM28 8h1v1h-1zM31 8h1v1h-1zM34 8h1v1h-1zM25 9h10v1h-10zM25 10h1v1h-1zM34 10h1v1h-1zM38 0h1v1h-1zM42 0h1v1h-1zM44 0h1v1h-1zM38 1h1v1h-1zM42 1h1v1h-1zM45 1h1v1h-1zM37 2h1v1h-1zM42 2h4v1h-4zM37 3h1v1h-1zM40 3h3v1h-3zM36 4h3v1h-3zM42 4h5v1h-5zM38 5h1v1h-1zM40 5h3v1h-3zM37 6h1v1h-1zM42 6h1v1h-1zM45 6h1v1h-1zM36 7h4v1h-4zM42 7h1v1h-1zM44 7h1v1h-1zM40 8h1v1h-1zM43 8h1v1h-1zM46 8h1v1h-1zM38 9h2v1h-2zM42 9h1v1h-1zM44 9h1v1h-1zM46 9h1v1h-1zM36 10h2v1h-2zM40 10h2v1h-2zM45 10h2v1h-2z"/></svg>
<div class="wb" style="left:532.4px;top:10px;width:30.3px;height:16.6px;"></div>
<div style="left:542.1999999999999px;top:18px;width:10.6px;height:4.8px;background:#fff;border:1px solid #3f4854;border-radius:1px"></div>
<div class="wb" style="left:565.4px;top:10px;width:30.3px;height:16.6px;"></div>
<div style="left:575.1999999999999px;top:14px;width:10.8px;height:8.8px;background:#fff;border:1px solid #3f4854;border-radius:1px"></div>
<div style="left:577.8px;top:16.8px;width:5.6px;height:3.2px;background:#7d8796;border:1px solid #3f4854"></div>
<div class="wc" style="left:598.4px;top:10px;width:30.3px;height:16.6px;"></div>
<svg class="abs" style="left:607.8px;top:14px" width="11" height="9" viewBox="0 0 11 9"><path d="M0.5 0.5h3.2l1.8 2.1 1.8-2.1h3.2l-3.4 3.9 3.4 3.9h-3.2l-1.8-2.1-1.8 2.1h-3.2l3.4-3.9z" fill="#fff" stroke="#4d2620" stroke-width=".9" stroke-linejoin="round"/></svg>
<div style="left:7px;top:30px;width:624px;height:50px;background:#f0f0f0"></div>
<div style="left:18px;top:41px;width:41px;height:23px;background:#1a1a1a"></div>
<div class="btn" style="left:19px;top:42px;width:39px;height:21px;background:#f0f0f0"></div>
<span class="t" style="left:18px;top:46px;width:41px;text-align:center;font-size:11px;line-height:13px">X+</span>
<div class="btn" style="left:73px;top:41px;width:41px;height:23px;background:#f0f0f0"></div>
<span class="t" style="left:73px;top:46px;width:41px;text-align:center;font-size:11px;line-height:13px">X-</span>
<div class="btn" style="left:129px;top:41px;width:41px;height:23px;background:#f0f0f0"></div>
<span class="t" style="left:129px;top:46px;width:41px;text-align:center;font-size:11px;line-height:13px">Z+</span>
<div class="btn" style="left:185px;top:41px;width:41px;height:23px;background:#f0f0f0"></div>
<span class="t" style="left:185px;top:46px;width:41px;text-align:center;font-size:11px;line-height:13px">Z-</span>
<div class="btn" style="left:240px;top:41px;width:41px;height:23px;background:#f0f0f0"></div>
<span class="t" style="left:240px;top:46px;width:41px;text-align:center;font-size:11px;line-height:13px">1*1</span>
<div class="btn" style="left:295px;top:41px;width:60px;height:23px;background:#f0f0f0"></div>
<svg class="bt" style="left:301px;top:45px" width="50" height="14" viewBox="0 -1 50 14" shape-rendering="crispEdges" role="img" aria-label="载入轮廓"><title>载入轮廓</title><path fill="#000" d="M3 0h1v1h-1zM7 0h1v1h-1zM1 1h5v1h-5zM7 1h1v1h-1zM9 1h1v1h-1zM3 2h1v1h-1zM7 2h1v1h-1zM10 2h1v1h-1zM0 3h11v1h-11zM2 4h1v1h-1zM7 4h1v1h-1zM0 5h6v1h-6zM7 5h1v1h-1zM10 5h1v1h-1zM1 6h1v1h-1zM3 6h1v1h-1zM7 6h1v1h-1zM9 6h1v1h-1zM1 7h5v1h-5zM8 7h1v1h-1zM3 8h1v1h-1zM8 8h1v1h-1zM10 8h1v1h-1zM0 9h6v1h-6zM7 9h1v1h-1zM9 9h2v1h-2zM3 10h1v1h-1zM6 10h1v1h-1zM10 10h1v1h-1zM15 0h2v1h-2zM17 1h1v1h-1zM17 2h1v1h-1zM17 3h1v1h-1zM16 4h1v1h-1zM18 4h1v1h-1zM16 5h1v1h-1zM18 5h1v1h-1zM15 6h1v1h-1zM19 6h1v1h-1zM15 7h1v1h-1zM19 7h1v1h-1zM14 8h1v1h-1zM20 8h1v1h-1zM13 9h1v1h-1zM21 9h1v1h-1zM12 10h1v1h-1zM22 10h1v1h-1zM26 0h1v1h-1zM31 0h1v1h-1zM24 1h5v1h-5zM31 1h2v1h-2zM25 2h1v1h-1zM30 2h1v1h-1zM33 2h1v1h-1zM25 3h2v1h-2zM29 3h1v1h-1zM34 3h1v1h-1zM24 4h1v1h-1zM26 4h1v1h-1zM24 5h5v1h-5zM30 5h1v1h-1zM33 5h1v1h-1zM26 6h1v1h-1zM30 6h1v1h-1zM32 6h1v1h-1zM26 7h3v1h-3zM30 7h2v1h-2zM24 8h3v1h-3zM30 8h1v1h-1zM34 8h1v1h-1zM26 9h1v1h-1zM30 9h1v1h-1zM34 9h1v1h-1zM26 10h1v1h-1zM31 10h4v1h-4zM42 0h1v1h-1zM37 1h10v1h-10zM37 2h1v1h-1zM40 2h1v1h-1zM37 3h10v1h-10zM37 4h1v1h-1zM39 4h1v1h-1zM42 4h1v1h-1zM44 4h1v1h-1zM46 4h1v1h-1zM37 5h1v1h-1zM39 5h1v1h-1zM42 5h1v1h-1zM44 5h2v1h-2zM37 6h6v1h-6zM44 6h1v1h-1zM46 6h1v1h-1zM37 7h1v1h-1zM40 7h1v1h-1zM44 7h1v1h-1zM46 7h1v1h-1zM37 8h6v1h-6zM44 8h1v1h-1zM46 8h1v1h-1zM36 9h1v1h-1zM40 9h1v1h-1zM44 9h3v1h-3zM36 10h1v1h-1zM39 10h2v1h-2zM44 10h1v1h-1z"/></svg>
<svg class="abs" style="left:7px;top:80px" width="624" height="352" viewBox="7 80 624 352"><rect x="7" y="80" width="624" height="352" fill="#000"/><path d="M57.5 102V402M149.5 102V402M241.5 102V402M333.5 102V402M425.5 102V402M517.5 102V402M609.5 102V402M58 102.5H610M58 152.5H610M58 202.5H610M58 252.5H610M58 302.5H610M58 352.5H610" stroke="#4c4c4c" stroke-width="1" fill="none" shape-rendering="crispEdges"/><path d="M229 402V100H258V402" stroke="#ffff3c" stroke-width="2" fill="none" shape-rendering="crispEdges"/><path d="M521 402V100H617V402" stroke="#28f0f8" stroke-width="2" fill="none" shape-rendering="crispEdges"/><path d="M57.5 99.5V402.5H612" stroke="#22e822" stroke-width="3" fill="none"/><path d="M56 101l1.5-2.5 1.5 2.5z" fill="#22e822"/><rect x="17" y="102" width="36" height="16" fill="#fff"/><text transform="translate(17.6 115) scale(.95 1)" class="ax">18.00</text><rect x="17" y="152" width="36" height="16" fill="#fff"/><text transform="translate(17.6 165) scale(.95 1)" class="ax">15.00</text><rect x="17" y="202" width="36" height="16" fill="#fff"/><text transform="translate(17.6 215) scale(.95 1)" class="ax">12.00</text><rect x="17" y="252" width="28" height="16" fill="#fff"/><text transform="translate(17.6 265) scale(.95 1)" class="ax">9.00</text><rect x="17" y="302" width="28" height="16" fill="#fff"/><text transform="translate(17.6 315) scale(.95 1)" class="ax">6.00</text><rect x="17" y="352" width="28" height="16" fill="#fff"/><text transform="translate(17.6 365) scale(.95 1)" class="ax">3.00</text><rect x="37" y="402" width="28" height="16" fill="#fff"/><text transform="translate(37.6 415) scale(.95 1)" class="ax">0.00</text><rect x="129" y="402" width="28" height="16" fill="#fff"/><text transform="translate(129.6 415) scale(.95 1)" class="ax">3.00</text><rect x="221" y="402" width="28" height="16" fill="#fff"/><text transform="translate(221.6 415) scale(.95 1)" class="ax">6.00</text><rect x="313" y="402" width="28" height="16" fill="#fff"/><text transform="translate(313.6 415) scale(.95 1)" class="ax">9.00</text><rect x="405" y="402" width="36" height="16" fill="#fff"/><text transform="translate(405.6 415) scale(.95 1)" class="ax">12.00</text><rect x="497" y="402" width="36" height="16" fill="#fff"/><text transform="translate(497.6 415) scale(.95 1)" class="ax">15.00</text><rect x="589" y="402" width="36" height="16" fill="#fff"/><text transform="translate(589.6 415) scale(.95 1)" class="ax">18.00</text><path d="M241 175.5H588" stroke="#d4d4d4" stroke-width="1" stroke-dasharray="4 3" fill="none"/><path d="M76 336.5H198.5V432" stroke="#22e822" stroke-width="2" fill="none" stroke-linejoin="round"/><path d="M236.5 432V177L242 175 247 174H262L266 172.5H292L294 171.3H300L302 172.5H312L314 171.7H370L372 172.5H385L387 174H400L403 174.5 420 174.7 426 175.6 440 176.2 452 177.8 459 177.5 476 179H490L493 176.6 510 176.4 515 174.8 520 174 530 172.5 539 171.3 556 171 562 169.7H577L584 171.5 589 173.5V332.5H608.5L614 336H631" transform="translate(0 .5)" stroke="#22e822" stroke-width="2" fill="none" stroke-linejoin="round"/><ellipse cx="236.5" cy="176.5" rx="4.5" ry="2.5" stroke="#fff" stroke-width="1.7" fill="none"/><ellipse cx="588.5" cy="172" rx="4.5" ry="3" stroke="#fff" stroke-width="1.7" fill="none"/></svg>
<div style="left:20px;top:437px;width:600px;height:400px;background:#b9d1ea;border:1px solid #1f252d;border-radius:6px 6px 0 0;overflow:hidden"><div class="cap" style="left:0;top:0;width:598px;height:29px"></div><div style="left:0;top:0;width:598px;height:398px;border:1px solid rgba(255,255,255,.9);border-right-color:#a6e3f4;border-bottom-color:#a6e3f4;border-radius:5px 5px 0 0"></div></div>
<svg class="abs" style="left:29.8px;top:448.3px" width="15" height="13" viewBox="0 0 15 13"><defs><linearGradient id="ig" x1="0" y1="0" x2="1" y2="1"><stop offset="0" stop-color="#5fa79a"/><stop offset=".5" stop-color="#2f8a6c"/><stop offset="1" stop-color="#4a9a86"/></linearGradient></defs><rect x="0.5" y="0.5" width="14" height="11.8" fill="#fdfdfd" stroke="#8b929c"/><path d="M0.5 12.3V0.5" stroke="#c9d3de"/><rect x="1.7" y="2.4" width="5.6" height="8" fill="url(#ig)"/><rect x="12.2" y="2.6" width="1" height="3.9" fill="#1e1e1e"/><rect x="8.6" y="9.3" width="2.4" height=".9" fill="#a9aeb4"/></svg>
<svg class="bt" style="left:50px;top:449px" width="50" height="14" viewBox="0 -1 50 14" shape-rendering="crispEdges" role="img" aria-label="原始图像"><title>原始图像</title><path fill="#000" d="M2 0h9v1h-9zM2 1h1v1h-1zM6 1h1v1h-1zM2 2h1v1h-1zM4 2h6v1h-6zM2 3h1v1h-1zM4 3h1v1h-1zM9 3h1v1h-1zM2 4h1v1h-1zM4 4h6v1h-6zM2 5h1v1h-1zM4 5h1v1h-1zM9 5h1v1h-1zM2 6h1v1h-1zM4 6h6v1h-6zM2 7h1v1h-1zM6 7h1v1h-1zM2 8h1v1h-1zM4 8h1v1h-1zM6 8h1v1h-1zM8 8h1v1h-1zM1 9h1v1h-1zM3 9h1v1h-1zM6 9h1v1h-1zM9 9h2v1h-2zM0 10h1v1h-1zM2 10h1v1h-1zM5 10h2v1h-2zM10 10h1v1h-1zM14 0h1v1h-1zM19 0h1v1h-1zM14 1h1v1h-1zM19 1h1v1h-1zM12 2h5v1h-5zM18 2h1v1h-1zM21 2h1v1h-1zM14 3h1v1h-1zM16 3h1v1h-1zM18 3h1v1h-1zM22 3h1v1h-1zM14 4h1v1h-1zM16 4h7v1h-7zM13 5h1v1h-1zM16 5h1v1h-1zM13 6h1v1h-1zM15 6h1v1h-1zM18 6h5v1h-5zM14 7h2v1h-2zM18 7h1v1h-1zM22 7h1v1h-1zM14 8h1v1h-1zM16 8h1v1h-1zM18 8h1v1h-1zM22 8h1v1h-1zM13 9h1v1h-1zM16 9h1v1h-1zM18 9h5v1h-5zM12 10h1v1h-1zM18 10h1v1h-1zM22 10h1v1h-1zM25 0h10v1h-10zM25 1h1v1h-1zM28 1h1v1h-1zM34 1h1v1h-1zM25 2h1v1h-1zM28 2h5v1h-5zM34 2h1v1h-1zM25 3h1v1h-1zM27 3h2v1h-2zM31 3h1v1h-1zM34 3h1v1h-1zM25 4h2v1h-2zM29 4h2v1h-2zM34 4h1v1h-1zM25 5h1v1h-1zM28 5h1v1h-1zM31 5h1v1h-1zM34 5h1v1h-1zM25 6h3v1h-3zM29 6h1v1h-1zM32 6h3v1h-3zM25 7h1v1h-1zM30 7h1v1h-1zM34 7h1v1h-1zM25 8h1v1h-1zM29 8h1v1h-1zM34 8h1v1h-1zM25 9h1v1h-1zM30 9h1v1h-1zM34 9h1v1h-1zM25 10h10v1h-10zM39 0h1v1h-1zM42 0h4v1h-4zM39 1h1v1h-1zM41 1h1v1h-1zM44 1h1v1h-1zM38 2h1v1h-1zM40 2h7v1h-7zM38 3h2v1h-2zM41 3h1v1h-1zM43 3h1v1h-1zM46 3h1v1h-1zM37 4h2v1h-2zM41 4h6v1h-6zM36 5h1v1h-1zM38 5h1v1h-1zM42 5h1v1h-1zM46 5h1v1h-1zM38 6h1v1h-1zM40 6h2v1h-2zM43 6h1v1h-1zM45 6h1v1h-1zM38 7h1v1h-1zM42 7h1v1h-1zM44 7h1v1h-1zM38 8h1v1h-1zM40 8h2v1h-2zM43 8h3v1h-3zM38 9h1v1h-1zM42 9h1v1h-1zM44 9h1v1h-1zM46 9h1v1h-1zM38 10h1v1h-1zM40 10h2v1h-2zM43 10h2v1h-2z"/></svg>
<div class="wb" style="left:513.3px;top:447.3px;width:30.3px;height:16.6px;"></div>
<div style="left:523.0999999999999px;top:455.3px;width:10.6px;height:4.8px;background:#fff;border:1px solid #3f4854;border-radius:1px"></div>
<div class="wb" style="left:546.3px;top:447.3px;width:30.3px;height:16.6px;"></div>
<div style="left:556.0999999999999px;top:451.3px;width:10.8px;height:8.8px;background:#fff;border:1px solid #3f4854;border-radius:1px"></div>
<div style="left:558.6999999999999px;top:454.1px;width:5.6px;height:3.2px;background:#7d8796;border:1px solid #3f4854"></div>
<div class="wc" style="left:579.3px;top:447.3px;width:30.3px;height:16.6px;"></div>
<svg class="abs" style="left:588.6999999999999px;top:451.3px" width="11" height="9" viewBox="0 0 11 9"><path d="M0.5 0.5h3.2l1.8 2.1 1.8-2.1h3.2l-3.4 3.9 3.4 3.9h-3.2l-1.8-2.1-1.8 2.1h-3.2l3.4-3.9z" fill="#fff" stroke="#4d2620" stroke-width=".9" stroke-linejoin="round"/></svg>
<svg class="abs" style="left:28px;top:467px" width="584" height="362" viewBox="28 467 584 362"><defs><filter id="sp" x="-2%" y="-400%" width="104%" height="900%" color-interpolation-filters="sRGB"><feGaussianBlur in="SourceGraphic" stdDeviation="0.8" result="b"/><feTurbulence type="fractalNoise" baseFrequency="0.8" numOctaves="2" seed="7" result="n"/><feColorMatrix in="n" type="matrix" values="0 0 0 0 1 0 0 0 0 1 0 0 0 0 1 2.6 0 0 0 -0.6" result="na"/><feComposite in="b" in2="na" operator="in" result="s"/><feGaussianBlur in="s" stdDeviation="0.4"/></filter><filter id="sp2" x="-2%" y="-400%" width="104%" height="900%" color-interpolation-filters="sRGB"><feGaussianBlur in="SourceGraphic" stdDeviation="0.55" result="b"/><feTurbulence type="fractalNoise" baseFrequency="0.8" numOctaves="2" seed="11" result="n"/><feColorMatrix in="n" type="matrix" values="0 0 0 0 1 0 0 0 0 1 0 0 0 0 1 2.4 0 0 0 -0.25" result="na"/><feComposite in="b" in2="na" operator="in" result="s"/><feGaussianBlur in="s" stdDeviation="0.4"/></filter><linearGradient id="bgv" x1="0" x2="1" y1="0" y2="0"><stop offset="0" stop-color="#0b0b0b"/><stop offset=".2" stop-color="#080808"/><stop offset=".23" stop-color="#050505"/><stop offset="1" stop-color="#060606"/></linearGradient></defs><rect x="28" y="467" width="584" height="362" fill="url(#bgv)"/><g fill="none" stroke-linecap="round" stroke-linejoin="round"><g filter="url(#sp)"><path d="M26 806.6L90 807.4 153 808.4" stroke="#fff" stroke-width="5.2"/><path d="M571 807.3H614" stroke="#fff" stroke-width="4.4"/><path d="M180 661L190 658.6 209 656.6 250 655.8 287 655.6 330 656.6 370 658 400 659.4 429 660.7 468 661 487 658.6 495 657.4" stroke="#8c8c8c" stroke-width="2.6"/><path d="M180 660.7 185 659.0 190 657.4 195 656.4 200 655.7 205 655.1 210 654.5 215 654.3 220 654.2 225 654.1 230 654.0 235 653.9 240 653.8 245 653.7 250 653.6 255 653.6 260 653.5 265 653.5 270 653.5 275 653.5 280 653.4 285 653.4 290 653.5 295 653.6 300 653.7 305 653.9 310 654.1 315 654.2 320 654.4 325 654.6 330 654.8 335 655.0 340 655.2 345 655.5 350 655.8 355 656.0 360 656.3 365 656.6 370 656.8 375 657.1 380 657.5 385 657.8 390 658.1 395 658.4 400 658.7 405 659.0 410 659.2 415 659.5 420 659.8 425 660.1 425 660.9 420 660.8 415 660.6 410 660.4 405 660.3 400 660.1 395 660.0 390 659.8 385 659.6 380 659.5 375 659.3 370 659.2 365 659.1 360 659.0 355 658.9 350 658.8 345 658.7 340 658.7 335 658.5 330 658.4 325 658.4 320 658.3 315 658.3 310 658.2 305 658.2 300 658.1 295 658.0 290 657.9 285 657.8 280 657.8 275 657.9 270 657.9 265 657.9 260 657.9 255 658.0 250 658.0 245 658.1 240 658.2 235 658.3 230 658.4 225 658.5 220 658.6 215 658.7 210 658.7 205 659.0 200 659.4 195 659.8 190 659.8 185 660.6 180 661.3z" fill="#d0d0d0" stroke="#d0d0d0" stroke-width=".6"/><path d="M486 658.4C496 656 506 653.4 520 652.2C535 651.2 552 651 560 651.6C566 652 567.5 656.5 564 657.8C552 658.6 530 658.2 515 658.6C505 659 495 659.6 486 659.6z" fill="#fff" stroke="#fff" stroke-width="1"/></g><g filter="url(#sp2)"><path d="M26 806.6L90 807.4 153 808.4" stroke="#fff" stroke-width="4.2"/><path d="M572 807.3H614" stroke="#fff" stroke-width="3.4"/><path d="M180 661L190 658.6 209 656.6 250 655.8 287 655.6 330 656.6 370 658 400 659.4 429 660.7 468 661 487 658.6 495 657.4" stroke="#a8a8a8" stroke-width="1"/><path d="M180 660.9 185 659.5 190 658.1 195 657.4 200 656.8 205 656.2 210 655.7 215 655.6 220 655.5 225 655.4 230 655.3 235 655.2 240 655.1 245 655.0 250 654.9 255 654.8 260 654.8 265 654.8 270 654.8 275 654.7 280 654.7 285 654.7 290 654.7 295 654.9 300 655.0 305 655.1 310 655.3 315 655.4 320 655.5 325 655.7 330 655.8 335 656.0 340 656.2 345 656.4 350 656.7 355 656.9 360 657.1 365 657.3 370 657.5 375 657.8 380 658.0 385 658.3 390 658.6 395 658.8 400 659.1 405 659.3 410 659.6 415 659.8 420 660.1 425 660.4 425 660.7 420 660.5 415 660.3 410 660.1 405 659.9 400 659.7 395 659.5 390 659.3 385 659.1 380 658.9 375 658.7 370 658.5 365 658.4 360 658.2 355 658.1 350 657.9 345 657.8 340 657.7 335 657.5 330 657.4 325 657.3 320 657.2 315 657.1 310 657.0 305 656.9 300 656.8 295 656.7 290 656.6 285 656.5 280 656.6 275 656.6 270 656.6 265 656.6 260 656.7 255 656.7 250 656.7 245 656.8 240 656.9 235 657.0 230 657.1 225 657.2 220 657.3 215 657.4 210 657.5 205 657.8 200 658.3 195 658.8 190 659.1 185 660.1 180 661.1z" fill="#fff" stroke="#fff" stroke-width=".4"/><path d="M492 657.6C500 656 508 654.4 520 653.6C535 652.8 552 652.6 559 653C564 653.4 565 656 562 656.6C552 657.2 530 657 515 657.4C505 657.8 498 658.2 492 658.4z" fill="#fff" stroke="#fff" stroke-width=".6"/></g></g></svg>
<style>.ax{font-family:"Liberation Sans",sans-serif;font-weight:bold;font-size:14.3px;letter-spacing:.4px;fill:#000}</style>
</body></html>
